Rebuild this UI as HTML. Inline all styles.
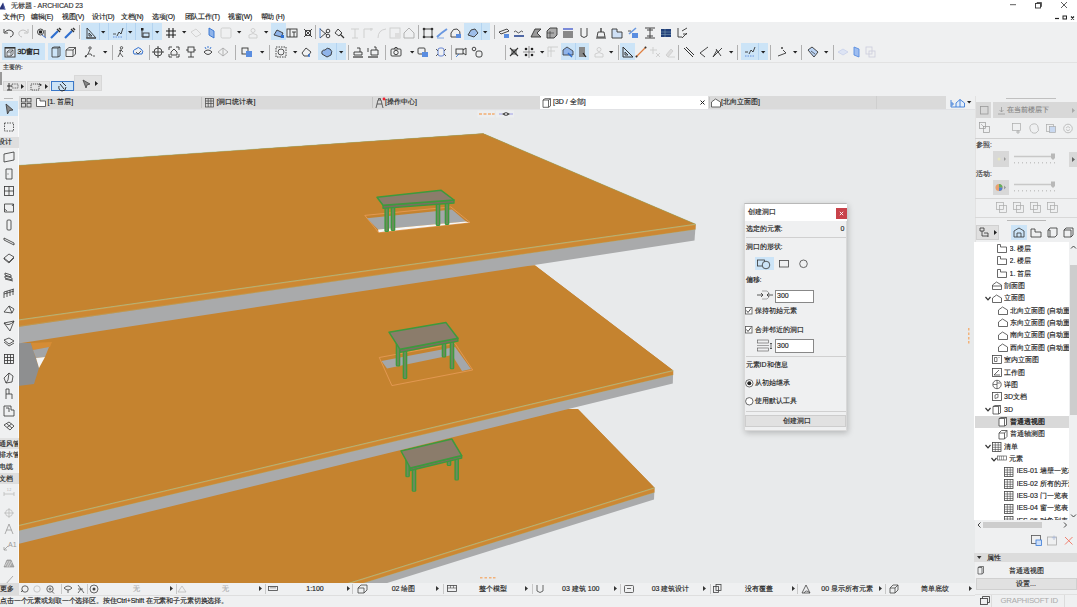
<!DOCTYPE html>
<html><head><meta charset="utf-8">
<style>
*{margin:0;padding:0;box-sizing:border-box}
html,body{width:1077px;height:607px;overflow:hidden;background:#eff0f1;font-family:"Liberation Sans",sans-serif;color:#222}
.a{position:absolute}
.t{position:absolute;white-space:nowrap;-webkit-text-stroke:0.15px currentColor}
svg{overflow:visible}
</style></head><body>

<svg class="a" style="left:0px;top:0px;" width="1077" height="607" viewBox="0 0 1077 607"><defs><clipPath id="vp"><rect x="18" y="109" width="957" height="474"/></clipPath></defs><rect x="18" y="109" width="957" height="474" fill="#e8eaeb"/><g clip-path="url(#vp)"><polygon points="577.8,409 654.5,487.8 654,499.5 387.9,582.7 300,620 0,620 0,420" fill="#a9aaab"/><polygon points="577.8,409 654.5,487.8 654.5,492.5 340,590.5 0,620 0,420" fill="#cc8833"/><polygon points="577.8,409 654.5,487.8 340,586 0,620 0,420" fill="#c5832f"/><polyline points="654.5,487.8 340,586" fill="none" stroke="#9fc79a" stroke-width="0.7"/><polyline points="654.5,488.3 340,586.5" fill="none" stroke="#e9b060" stroke-width="0.5" opacity="0.6"/><polyline points="654.5,492.5 340,590.5" fill="none" stroke="#9fc79a" stroke-width="0.5" opacity="0.5"/><rect x="405.3" y="458" width="4.6" height="19.30000000000001" rx="1.5" fill="#3d9a3d"/><rect x="406.70000000000005" y="458" width="1.8" height="18.30000000000001" fill="#6f8a5e"/><rect x="446.7" y="446" width="4.6" height="20" rx="1.5" fill="#3d9a3d"/><rect x="448.1" y="446" width="1.8" height="19" fill="#6f8a5e"/><rect x="411.7" y="462" width="4.6" height="29.80000000000001" rx="1.5" fill="#3d9a3d"/><rect x="413.1" y="462" width="1.8" height="28.80000000000001" fill="#6f8a5e"/><rect x="454.4" y="452" width="4.6" height="28.600000000000023" rx="1.5" fill="#3d9a3d"/><rect x="455.8" y="452" width="1.8" height="27.600000000000023" fill="#6f8a5e"/><polygon points="410.3,468 461.7,455.6 461.7,458.1 410.3,470.5" fill="#7b6f62" stroke="#3d9a3d" stroke-width="1.3" stroke-linejoin="round"/><polygon points="401,451 451.8,439 461.7,455.6 410.3,468" fill="#8b7c6b" stroke="#3d9a3d" stroke-width="1.5" stroke-linejoin="round"/><polygon points="535,265.6 673.2,370.5 672.8,383.4 0,548.3 0,260" fill="#a9aaab"/><polygon points="535,265.6 673.2,370.5 673.2,375 0,535.4 0,260" fill="#cc8833"/><polygon points="535,265.6 673.2,370.5 0,529.9 0,260" fill="#c5832f"/><polyline points="673.2,370.5 0,529.9" fill="none" stroke="#9fc79a" stroke-width="0.7"/><polyline points="673.2,371 0,530.4" fill="none" stroke="#e9b060" stroke-width="0.5" opacity="0.6"/><polyline points="673.2,375 0,535.4" fill="none" stroke="#9fc79a" stroke-width="0.5" opacity="0.5"/><polygon points="18,343 31,343 39,368 34,384 18,386" fill="#8e8f90"/><polygon points="31,343 52,342 50,347 33,350" fill="#d58c35"/><polygon points="33,350 49,347 45,357 36,358" fill="#a3a5a7"/><polygon points="36,358 45,357 39,368" fill="#f4f5f5"/><polygon points="379.3,357.5 455,343.4 472.7,370 391.9,385.6" fill="#c5832f" stroke="#eea060" stroke-width="0.7"/><polygon points="381.5,361 455,347 471,369 462,371 452,355 387,368.6" fill="#a4a7aa"/><rect x="395.7" y="338" width="4.6" height="28.399999999999977" rx="1.5" fill="#3d9a3d"/><rect x="397.1" y="338" width="1.8" height="27.399999999999977" fill="#6f8a5e"/><rect x="441.7" y="328" width="4.6" height="29.5" rx="1.5" fill="#3d9a3d"/><rect x="443.1" y="328" width="1.8" height="28.5" fill="#6f8a5e"/><rect x="402.7" y="345" width="4.6" height="34" rx="1.5" fill="#3d9a3d"/><rect x="404.1" y="345" width="1.8" height="33" fill="#6f8a5e"/><rect x="449.7" y="334" width="4.6" height="35.30000000000001" rx="1.5" fill="#3d9a3d"/><rect x="451.1" y="334" width="1.8" height="34.30000000000001" fill="#6f8a5e"/><polygon points="400,349.3 457.9,338.2 457.9,341.2 400,352.3" fill="#7b6f62" stroke="#3d9a3d" stroke-width="1.3" stroke-linejoin="round"/><polygon points="389,332.2 446,322.6 457.9,338.2 400,349.3" fill="#8b7c6b" stroke="#3d9a3d" stroke-width="1.5" stroke-linejoin="round"/><polygon points="18,165.4 483.2,133.6 695.7,224.2 694.5,240.6 18,343.5" fill="#a9aaab"/><polygon points="18,165.4 483.2,133.6 695.7,224.2 695.5,229.5 18,326.9" fill="#cc8833"/><polygon points="18,165.4 483.2,133.6 695.7,224.2 18,320" fill="#c5832f"/><polyline points="18,165.4 483.2,133.6 695.7,224.2" fill="none" stroke="#8fae6a" stroke-width="0.6" opacity="0.7"/><polyline points="695.7,224.2 18,320" fill="none" stroke="#9fc79a" stroke-width="0.7"/><polyline points="695.7,224.7 18,320.5" fill="none" stroke="#e9b060" stroke-width="0.5" opacity="0.6"/><polyline points="695.5,229.5 18,326.4" fill="none" stroke="#9fc79a" stroke-width="0.5" opacity="0.5"/><polygon points="364.8,215.4 450.8,206.9 470,222.4 378.7,232.5" fill="#c5832f" stroke="#eea060" stroke-width="0.7"/><polygon points="367,218.2 452,209.6 466,221.6 378,229.5" fill="#a4a7aa"/><polygon points="378,229.5 466,221.6 469,222.6 378.7,232.3" fill="#f6f7f7"/><rect x="384.4" y="200" width="4.6" height="32" rx="1.5" fill="#3d9a3d"/><rect x="385.8" y="200" width="1.8" height="31" fill="#6f8a5e"/><rect x="390.7" y="204" width="4.6" height="27" rx="1.5" fill="#3d9a3d"/><rect x="392.1" y="204" width="1.8" height="26" fill="#6f8a5e"/><rect x="435.7" y="196" width="4.6" height="30" rx="1.5" fill="#3d9a3d"/><rect x="437.1" y="196" width="1.8" height="29" fill="#6f8a5e"/><rect x="444.7" y="199" width="4.6" height="26" rx="1.5" fill="#3d9a3d"/><rect x="446.1" y="199" width="1.8" height="25" fill="#6f8a5e"/><polygon points="383,205.3 454,200 454,203 383,208.3" fill="#7b6f62" stroke="#3d9a3d" stroke-width="1.3" stroke-linejoin="round"/><polygon points="377,197.3 441.2,190.3 454,200 383,205.3" fill="#8b7c6b" stroke="#3d9a3d" stroke-width="1.5" stroke-linejoin="round"/></g><g fill="#f2b27a"><rect x="479" y="113" width="3" height="1.6"/><rect x="483.5" y="113" width="3" height="1.6"/><rect x="488" y="113" width="3" height="1.6"/><rect x="492" y="113" width="2.5" height="1.6"/></g><rect x="477.5" y="110.5" width="17" height="7" fill="#eceef0"/><rect x="496" y="110.5" width="18" height="7" fill="#eceef0"/><path d="M502.5,114 Q506,111 509.5,114 Q506,117 502.5,114 Z" fill="#666" stroke="#333" stroke-width="0.6"/><circle cx="506" cy="114" r="1" fill="#ddd"/><g fill="#f2b27a"><rect x="479" y="113.2" width="3" height="1.6"/><rect x="483.5" y="113.2" width="3" height="1.6"/><rect x="488" y="113.2" width="3" height="1.6"/><rect x="492" y="113.2" width="2.5" height="1.6"/></g><line x1="499" y1="114" x2="502" y2="114" stroke="#a0a0e8" stroke-width="1"/><line x1="510" y1="114" x2="513" y2="114" stroke="#a0a0e8" stroke-width="1"/><g fill="#f2b27a"><rect x="968" y="328" width="1.5" height="2.5"/><rect x="968" y="332.5" width="1.5" height="2.5"/><rect x="968" y="337" width="1.5" height="2.5"/><rect x="968" y="341" width="1.5" height="2.5"/></g><g fill="#f2b27a"><rect x="480" y="577" width="2.5" height="1.5"/><rect x="484.5" y="577" width="2.5" height="1.5"/><rect x="489" y="577" width="2.5" height="1.5"/><rect x="493" y="577" width="2.5" height="1.5"/></g></svg>
<div class="a" style="left:0px;top:0px;width:1077px;height:22px;background:#fff"></div>
<svg class="a" style="left:0px;top:1px;" width="7" height="9" viewBox="0 0 7 9"><path d="M-1,8.5 L3,1.5 L5.5,8.5 Z" fill="#2a3478"/><path d="M3,1.5 L5.5,8.5 L4,8.5 Z" fill="#5a68b0"/></svg>
<div class="t" style="left:11px;top:1px;font-size:7px;line-height:9px;color:#333;letter-spacing:-0.1px">无标题 - ARCHICAD 23</div>
<div class="t" style="left:3px;top:12.5px;font-size:6.8px;line-height:8.8px;color:#222;letter-spacing:-0.2px">文件(F)</div>
<div class="t" style="left:31px;top:12.5px;font-size:6.8px;line-height:8.8px;color:#222;letter-spacing:-0.2px">编辑(E)</div>
<div class="t" style="left:62px;top:12.5px;font-size:6.8px;line-height:8.8px;color:#222;letter-spacing:-0.2px">视图(V)</div>
<div class="t" style="left:92px;top:12.5px;font-size:6.8px;line-height:8.8px;color:#222;letter-spacing:-0.2px">设计(D)</div>
<div class="t" style="left:121px;top:12.5px;font-size:6.8px;line-height:8.8px;color:#222;letter-spacing:-0.2px">文档(N)</div>
<div class="t" style="left:152px;top:12.5px;font-size:6.8px;line-height:8.8px;color:#222;letter-spacing:-0.2px">选项(O)</div>
<div class="t" style="left:184.5px;top:12.5px;font-size:6.8px;line-height:8.8px;color:#222;letter-spacing:-0.2px">团队工作(T)</div>
<div class="t" style="left:228px;top:12.5px;font-size:6.8px;line-height:8.8px;color:#222;letter-spacing:-0.2px">视窗(W)</div>
<div class="t" style="left:260.5px;top:12.5px;font-size:6.8px;line-height:8.8px;color:#222;letter-spacing:-0.2px">帮助 (H)</div>
<svg class="a" style="left:1000px;top:0px;" width="77" height="22" viewBox="0 0 77 22"><line x1="10" y1="4.7" x2="16" y2="4.7" stroke="#333" stroke-width="0.8"/><rect x="35.5" y="3.5" width="5" height="4.5" fill="none" stroke="#333" stroke-width="0.9"/><path d="M37,3.5 V2.5 H41.5 V6.5 H40.5" fill="none" stroke="#333" stroke-width="0.8"/><path d="M61,2 L67,8 M67,2 L61,8" stroke="#333" stroke-width="0.8"/><line x1="55" y1="18.5" x2="59" y2="18.5" stroke="#222" stroke-width="1.2"/><rect x="63" y="16" width="3.5" height="3" fill="none" stroke="#222" stroke-width="1"/><path d="M71,16.5 L74,19.5 M74,16.5 L71,19.5" stroke="#222" stroke-width="1.1"/></svg>
<div class="a" style="left:0px;top:22px;width:1077px;height:40px;background:#eff0f1"></div>
<div class="a" style="left:0px;top:61.5px;width:1077px;height:1px;background:#e2e2e2"></div>
<div class="a" style="left:81.3px;top:23.3px;width:80.7px;height:17.2px;background:#cce4f7"></div>
<div class="a" style="left:98.5px;top:23.3px;width:0.8px;height:17.2px;background:#b3d3f0"></div>
<div class="a" style="left:108px;top:23.3px;width:0.8px;height:17.2px;background:#b3d3f0"></div>
<div class="a" style="left:125.6px;top:23.3px;width:0.8px;height:17.2px;background:#b3d3f0"></div>
<div class="a" style="left:135.2px;top:23.3px;width:0.8px;height:17.2px;background:#b3d3f0"></div>
<div class="a" style="left:152.4px;top:23.3px;width:0.8px;height:17.2px;background:#b3d3f0"></div>
<div class="a" style="left:271px;top:23.3px;width:14.6px;height:17.2px;background:#cce4f7"></div>
<div class="a" style="left:463.5px;top:23.3px;width:26.1px;height:17.2px;background:#cce4f7"></div>
<div class="a" style="left:480.5px;top:23.3px;width:0.8px;height:17.2px;background:#b3d3f0"></div>
<svg class="a" style="left:3px;top:26.5px;" width="12" height="12" viewBox="0 0 12 12"><path d="M2,5 Q6,1 10,5 Q11,9 7,10" fill="none" stroke="#333" stroke-width="0.9"/><path d="M1,2 V6 H5" fill="none" stroke="#333" stroke-width="0.9"/></svg>
<svg class="a" style="left:17px;top:26.5px;" width="12" height="12" viewBox="0 0 12 12"><path d="M10,5 Q6,1 2,5 Q1,9 5,10" fill="none" stroke="#bbb" stroke-width="0.9"/><path d="M11,2 V6 H7" fill="none" stroke="#bbb" stroke-width="0.9"/></svg>
<svg class="a" style="left:36px;top:26.5px;" width="12" height="12" viewBox="0 0 12 12"><circle cx="4.5" cy="5" r="3" fill="none" stroke="#333" stroke-width="0.9"/><rect x="3" y="3.5" width="3" height="3" fill="#222"/><path d="M9,3 V10" fill="none" stroke="#333" stroke-width="0.9"/><path d="M6,8 L10,11" stroke="#4a7ad8" stroke-width="1"/></svg>
<svg class="a" style="left:50px;top:26.5px;" width="12" height="12" viewBox="0 0 12 12"><path d="M1,11 L8,4" stroke="#2f6fd0" stroke-width="2.2"/><path d="M7,2 L10,5" stroke="#333" stroke-width="1.2"/><path d="M9,1 L11,3" stroke="#333" stroke-width="1.5"/></svg>
<svg class="a" style="left:64px;top:26.5px;" width="12" height="12" viewBox="0 0 12 12"><path d="M1,11 L8,4" stroke="#2f6fd0" stroke-width="2.2"/><path d="M7,2 L10,5" stroke="#333" stroke-width="1.2"/><path d="M9,1 L11,3" stroke="#333" stroke-width="1.5"/></svg>
<svg class="a" style="left:85px;top:26.5px;" width="12" height="12" viewBox="0 0 12 12"><path d="M2,1 V11 H11 Z" fill="none" stroke="#333" stroke-width="0.9"/><path d="M4,6 V9 H7 Z" fill="none" stroke="#333" stroke-width="0.9"/><path d="M1,11 H11" stroke="#555" stroke-width="1.3"/></svg>
<svg class="a" style="left:112px;top:26.5px;" width="12" height="12" viewBox="0 0 12 12"><path d="M1,7 H4" stroke="#333" stroke-width="0.8"/><path d="M5,9 L7,5 L9,7 L11,1" fill="none" stroke="#333" stroke-width="0.9"/><path d="M1,10 H11" stroke="#4a7ad8" stroke-width="0.8" stroke-dasharray="1.5,1"/></svg>
<svg class="a" style="left:139px;top:26.5px;" width="12" height="12" viewBox="0 0 12 12"><rect x="2" y="1" width="2.5" height="2.5" fill="#222"/><path d="M3,3 V10 H10" fill="none" stroke="#333" stroke-width="0.9"/><rect x="4" y="6" width="6" height="4" fill="none" stroke="#333" stroke-width="0.9"/></svg>
<svg class="a" style="left:165px;top:26.5px;" width="12" height="12" viewBox="0 0 12 12"><path d="M4,1 V11 M8,1 V11 M1,4 H11 M1,8 H11" stroke="#222" stroke-width="1.1"/></svg>
<svg class="a" style="left:190px;top:26.5px;" width="12" height="12" viewBox="0 0 12 12"><path d="M1,5 L6,2 L11,7 L6,10 Z" fill="none" stroke="#ccc" stroke-width="0.8"/></svg>
<svg class="a" style="left:206px;top:26.5px;" width="12" height="12" viewBox="0 0 12 12"><path d="M3,1 L8,4 V11 L3,8 Z" fill="#8fb4ea" stroke="#2f6fd0" stroke-width="0.9"/></svg>
<svg class="a" style="left:220px;top:26.5px;" width="12" height="12" viewBox="0 0 12 12"><rect x="1" y="1" width="10" height="10" rx="1.5" fill="none" stroke="#ccc" stroke-width="0.9"/></svg>
<svg class="a" style="left:247px;top:26.5px;" width="12" height="12" viewBox="0 0 12 12"><circle cx="6" cy="3.5" r="2" fill="none" stroke="#ccc" stroke-width="0.9"/><path d="M2,11 V8 Q6,5 10,8 V11 Z" fill="none" stroke="#ccc" stroke-width="0.9"/></svg>
<svg class="a" style="left:272.5px;top:26.5px;" width="12" height="12" viewBox="0 0 12 12"><path d="M1,8 L4,3 L10,6 L8,10 Z" fill="#8fb4ea" stroke="#333" stroke-width="0.9"/><rect x="8" y="8" width="3" height="3" fill="#2f6fd0"/></svg>
<svg class="a" style="left:286px;top:26.5px;" width="12" height="12" viewBox="0 0 12 12"><rect x="1" y="2" width="10" height="8" fill="none" stroke="#333" stroke-width="0.9"/><path d="M4,2 V10 M8,5 V10 M6,5 H10" fill="none" stroke="#333" stroke-width="0.9"/></svg>
<svg class="a" style="left:302px;top:26.5px;" width="12" height="12" viewBox="0 0 12 12"><path d="M2,2 L10,10 M10,2 L2,10" fill="none" stroke="#333" stroke-width="0.9"/><rect x="3.5" y="3.5" width="5" height="5" fill="none" stroke="#333" stroke-width="0.9"/></svg>
<svg class="a" style="left:319px;top:26.5px;" width="12" height="12" viewBox="0 0 12 12"><circle cx="9" cy="4" r="1.8" fill="none" stroke="#333" stroke-width="0.9"/><circle cx="9" cy="9" r="1.8" fill="none" stroke="#333" stroke-width="0.9"/><path d="M1,2 L8,8 M1,11 L8,5" fill="none" stroke="#333" stroke-width="0.9"/><path d="M1,1 V11" stroke="#2f6fd0" stroke-width="0.8"/></svg>
<svg class="a" style="left:333px;top:26.5px;" width="12" height="12" viewBox="0 0 12 12"><path d="M2,6 L5,2 L9,6 L6,9 Z" fill="none" stroke="#333" stroke-width="0.9"/><path d="M7,7 L11,11" stroke="#333" stroke-width="1.3"/></svg>
<svg class="a" style="left:349px;top:26.5px;" width="12" height="12" viewBox="0 0 12 12"><path d="M2,2 H10 M6,2 V11 M3,11 H9" fill="none" stroke="#ccc" stroke-width="0.9"/></svg>
<svg class="a" style="left:362px;top:26.5px;" width="12" height="12" viewBox="0 0 12 12"><path d="M2,11 V2 H11 M9,1 V4" fill="none" stroke="#ccc" stroke-width="0.9"/></svg>
<svg class="a" style="left:376px;top:26.5px;" width="12" height="12" viewBox="0 0 12 12"><path d="M2,11 Q2,3 10,2" fill="none" stroke="#ccc" stroke-width="0.9"/></svg>
<svg class="a" style="left:389px;top:26.5px;" width="12" height="12" viewBox="0 0 12 12"><rect x="1" y="1" width="10" height="10" fill="none" stroke="#ccc" stroke-width="0.9"/><rect x="6" y="6" width="5" height="5" fill="#ddd"/></svg>
<svg class="a" style="left:403px;top:26.5px;" width="12" height="12" viewBox="0 0 12 12"><path d="M1,6 L6,1 L11,6 V11 H1 Z" fill="none" stroke="#aaa" stroke-width="0.9"/></svg>
<svg class="a" style="left:422px;top:26.5px;" width="12" height="12" viewBox="0 0 12 12"><rect x="2" y="2" width="8" height="8" fill="none" stroke="#333" stroke-width="0.9"/><circle cx="2" cy="2" r="1.3" fill="#333"/><circle cx="10" cy="2" r="1.3" fill="#333"/><circle cx="2" cy="10" r="1.3" fill="#333"/><circle cx="10" cy="10" r="1.3" fill="#333"/></svg>
<svg class="a" style="left:436px;top:26.5px;" width="12" height="12" viewBox="0 0 12 12"><path d="M1,10 Q5,6 11,2" fill="none" stroke="#6a98e0" stroke-width="2"/><path d="M1,11 H8" stroke="#6a98e0" stroke-width="0.8"/></svg>
<svg class="a" style="left:450px;top:26.5px;" width="12" height="12" viewBox="0 0 12 12"><path d="M1,6 Q3,1 7,2 Q11,4 10,8" fill="none" stroke="#333" stroke-width="0.9"/><path d="M1,6 V10 H6" fill="none" stroke="#333" stroke-width="0.9"/><rect x="6" y="7" width="5" height="4" fill="#5a8de0"/></svg>
<svg class="a" style="left:466.5px;top:26.5px;" width="12" height="12" viewBox="0 0 12 12"><path d="M1,8 L4,3 L8,2 L11,6 L7,10 Z" fill="#9dbde8" stroke="#333" stroke-width="0.9"/></svg>
<svg class="a" style="left:498px;top:26.5px;" width="12" height="12" viewBox="0 0 12 12"><path d="M1,5 L9,2 L11,4 L3,7 Z" fill="none" stroke="#333" stroke-width="0.9"/><rect x="6" y="7" width="5" height="4" fill="#5a8de0"/></svg>
<svg class="a" style="left:513px;top:26.5px;" width="12" height="12" viewBox="0 0 12 12"><path d="M1,5 Q2.5,3 4,5 Q5.5,7 7,5 Q8.5,3 10,5" fill="none" stroke="#333" stroke-width="0.8"/><path d="M1,9 H11" stroke="#1a3a8a" stroke-width="1.5"/></svg>
<svg class="a" style="left:530px;top:26.5px;" width="12" height="12" viewBox="0 0 12 12"><path d="M1,10 L5,2 H11 L7,6 L11,10 Z" fill="#999" stroke="#333" stroke-width="0.9"/></svg>
<svg class="a" style="left:546px;top:26.5px;" width="12" height="12" viewBox="0 0 12 12"><path d="M1,4 L4,1 H11 V8 L8,11 H1 Z" fill="#aaa" stroke="#333" stroke-width="0.9"/><path d="M1,6 H8 M4,4 V11" stroke="#333" stroke-width="0.6"/></svg>
<svg class="a" style="left:562px;top:26.5px;" width="12" height="12" viewBox="0 0 12 12"><rect x="1" y="1" width="10" height="2" fill="#7a8ad8"/><rect x="1" y="4" width="10" height="7" fill="#888"/></svg>
<svg class="a" style="left:578px;top:26.5px;" width="12" height="12" viewBox="0 0 12 12"><path d="M3,1 V9 Q6,12 9,9 V1" fill="none" stroke="#333" stroke-width="0.9"/></svg>
<svg class="a" style="left:595px;top:26.5px;" width="12" height="12" viewBox="0 0 12 12"><path d="M6,1 V5" stroke="#333" stroke-width="1.3"/><path d="M3,5 H9 L10,10 H2 Z" fill="none" stroke="#333" stroke-width="0.9"/><path d="M1,11 H11" stroke="#333" stroke-width="1"/></svg>
<svg class="a" style="left:611px;top:26.5px;" width="12" height="12" viewBox="0 0 12 12"><path d="M1,2 H6 V5 H11 V11 H1 Z" fill="#cfe0f5" stroke="#333" stroke-width="0.9"/></svg>
<svg class="a" style="left:627px;top:26.5px;" width="12" height="12" viewBox="0 0 12 12"><path d="M2,7 L9,1" stroke="#6a98e0" stroke-width="1.6"/><rect x="5" y="6" width="6" height="5" fill="#5a8de0"/><path d="M1,4 H4" stroke="#333" stroke-width="0.8"/></svg>
<svg class="a" style="left:644px;top:26.5px;" width="12" height="12" viewBox="0 0 12 12"><path d="M1,1 H11 M1,11 H11 M6,1 V11 M3,3 H9 M3,9 H9" stroke="#444" stroke-width="1"/></svg>
<svg class="a" style="left:660px;top:26.5px;" width="12" height="12" viewBox="0 0 12 12"><rect x="1" y="2" width="10" height="8" fill="#22407a"/><path d="M1,5 H11 M1,7.5 H11 M5,2 V10" stroke="#8ab" stroke-width="0.5"/></svg>
<svg class="a" style="left:676px;top:26.5px;" width="12" height="12" viewBox="0 0 12 12"><path d="M2,1 V10 H6" fill="none" stroke="#333" stroke-width="0.9"/><path d="M6,4 L11,1 M6,11 L11,6 M7,7 H11" fill="none" stroke="#333" stroke-width="0.9"/></svg>
<svg class="a" style="left:101.3px;top:30.8px;" width="4.4" height="2.6" viewBox="0 0 4.4 2.6"><path d="M0,0 H4.4 L2.2,2.6 Z" fill="#222"/></svg>
<svg class="a" style="left:127.8px;top:30.8px;" width="4.4" height="2.6" viewBox="0 0 4.4 2.6"><path d="M0,0 H4.4 L2.2,2.6 Z" fill="#222"/></svg>
<svg class="a" style="left:155.3px;top:30.8px;" width="4.4" height="2.6" viewBox="0 0 4.4 2.6"><path d="M0,0 H4.4 L2.2,2.6 Z" fill="#222"/></svg>
<svg class="a" style="left:181.8px;top:30.8px;" width="4.4" height="2.6" viewBox="0 0 4.4 2.6"><path d="M0,0 H4.4 L2.2,2.6 Z" fill="#222"/></svg>
<svg class="a" style="left:237.3px;top:30.8px;" width="4.4" height="2.6" viewBox="0 0 4.4 2.6"><path d="M0,0 H4.4 L2.2,2.6 Z" fill="#222"/></svg>
<svg class="a" style="left:264.3px;top:30.8px;" width="4.4" height="2.6" viewBox="0 0 4.4 2.6"><path d="M0,0 H4.4 L2.2,2.6 Z" fill="#222"/></svg>
<svg class="a" style="left:482.8px;top:30.8px;" width="4.4" height="2.6" viewBox="0 0 4.4 2.6"><path d="M0,0 H4.4 L2.2,2.6 Z" fill="#222"/></svg>
<div class="a" style="left:31.5px;top:25px;width:1px;height:14px;background:#b0b0b0"></div>
<div class="a" style="left:79px;top:25px;width:1px;height:14px;background:#b0b0b0"></div>
<div class="a" style="left:315px;top:25px;width:1px;height:14px;background:#b0b0b0"></div>
<div class="a" style="left:417.5px;top:25px;width:1px;height:14px;background:#b0b0b0"></div>
<div class="a" style="left:494px;top:25px;width:1px;height:14px;background:#b0b0b0"></div>
<div class="a" style="left:2.2px;top:43px;width:42.4px;height:17.3px;background:#cce4f7"></div>
<div class="a" style="left:48px;top:43px;width:16.6px;height:17.3px;background:#cce4f7"></div>
<div class="a" style="left:317.5px;top:43px;width:28.5px;height:17.3px;background:#cce4f7"></div>
<div class="a" style="left:335.5px;top:43px;width:0.8px;height:17.3px;background:#b3d3f0"></div>
<div class="a" style="left:561px;top:43px;width:28px;height:17.3px;background:#cce4f7"></div>
<div class="a" style="left:575px;top:43px;width:0.8px;height:17.3px;background:#b3d3f0"></div>
<div class="a" style="left:620px;top:43px;width:14.6px;height:17.3px;background:#cce4f7"></div>
<div class="a" style="left:741px;top:43px;width:27px;height:17.3px;background:#cce4f7"></div>
<div class="a" style="left:758px;top:43px;width:0.8px;height:17.3px;background:#b3d3f0"></div>
<svg class="a" style="left:4px;top:46px;" width="12" height="12" viewBox="0 0 12 12"><rect x="1" y="1.5" width="10" height="9.5" fill="#dfe6ee" stroke="#444" stroke-width="1"/><rect x="1" y="1" width="10" height="1.6" fill="#333"/><path d="M3,10 V6 L5,4 H9 V8 L7,10 Z M3,6 H7 V10 M7,6 L9,4" fill="none" stroke="#444" stroke-width="0.7"/></svg>
<div class="t" style="left:17.5px;top:47px;font-size:7px;line-height:9px;color:#222;letter-spacing:-0.2px;-webkit-text-stroke:0.3px #222">3D窗口</div>
<svg class="a" style="left:50px;top:46px;" width="12" height="12" viewBox="0 0 12 12"><path d="M2,2 L4,1 H10 V10 L8,11 H2 Z M2,2 H8 V11 M8,2 L10,1" fill="none" stroke="#333" stroke-width="0.8"/></svg>
<svg class="a" style="left:65px;top:46px;" width="12" height="12" viewBox="0 0 12 12"><path d="M1,4 L4,1.5 H10.5 V8 L8,10.5 H1 Z M1,4 H8 V10.5 M8,4 L10.5,1.5" fill="none" stroke="#333" stroke-width="0.8"/></svg>
<svg class="a" style="left:84px;top:46px;" width="12" height="12" viewBox="0 0 12 12"><circle cx="6" cy="2" r="1.2" fill="none" stroke="#333" stroke-width="0.8"/><path d="M6,3.5 L4,8 L7,8 L8,10 M1,11 L4,8 M9,10 H11 M3,10.5 L1,11 L2,9" fill="none" stroke="#333" stroke-width="0.8"/></svg>
<svg class="a" style="left:115px;top:46px;" width="12" height="12" viewBox="0 0 12 12"><circle cx="6.5" cy="1.8" r="1.2" fill="none" stroke="#333" stroke-width="0.8"/><path d="M6,3.5 L5,7 L3,11 M5,7 L8,11 M4,5 L6,4 L8,6" fill="none" stroke="#333" stroke-width="0.8"/></svg>
<svg class="a" style="left:132px;top:46px;" width="12" height="12" viewBox="0 0 12 12"><path d="M2,8 Q0,4 4,3 Q6,0 9,3 Q12,5 10,8 Z" fill="none" stroke="#2f6fd0" stroke-width="1"/><path d="M4,6 L6,8 L9,5" fill="none" stroke="#333" stroke-width="0.8"/></svg>
<svg class="a" style="left:152px;top:46px;" width="12" height="12" viewBox="0 0 12 12"><circle cx="6" cy="6" r="4" fill="none" stroke="#333" stroke-width="0.9"/><path d="M6,0 V12 M0,6 H12" fill="none" stroke="#333" stroke-width="0.9"/></svg>
<svg class="a" style="left:168px;top:46px;" width="12" height="12" viewBox="0 0 12 12"><path d="M1,4 V1 H4 M8,1 H11 V4 M11,8 V11 H8 M4,11 H1 V8" fill="none" stroke="#333" stroke-width="0.9"/><path d="M3,6 L6,3 L9,6 V9 H3 Z" fill="none" stroke="#333" stroke-width="0.9"/></svg>
<svg class="a" style="left:185px;top:46px;" width="12" height="12" viewBox="0 0 12 12"><rect x="3" y="1" width="6" height="5" fill="none" stroke="#333" stroke-width="0.9"/><path d="M6,6 V11 M3,11 H9 M1,4 H3 M9,4 H11" fill="none" stroke="#333" stroke-width="0.9"/></svg>
<svg class="a" style="left:202px;top:46px;" width="12" height="12" viewBox="0 0 12 12"><path d="M2,6 Q6,2 10,6 Q6,11 2,6 Z" fill="none" stroke="#333" stroke-width="0.9"/><path d="M3,1 L4,3 M6,0 V2 M9,1 L8,3" stroke="#2f6fd0" stroke-width="0.9"/></svg>
<svg class="a" style="left:217px;top:46px;" width="12" height="12" viewBox="0 0 12 12"><path d="M1,6 L6,2 L11,6 L6,10 Z M6,2 V10" fill="none" stroke="#aaa" stroke-width="0.9"/></svg>
<svg class="a" style="left:241px;top:46px;" width="12" height="12" viewBox="0 0 12 12"><rect x="1" y="2" width="6" height="6" fill="none" stroke="#333" stroke-width="0.9"/><rect x="5" y="5" width="6" height="6" fill="#5a8de0"/></svg>
<svg class="a" style="left:274.5px;top:46px;" width="12" height="12" viewBox="0 0 12 12"><rect x="1" y="1" width="10" height="10" fill="none" stroke="#333" stroke-width="0.9" stroke-dasharray="1.5,1"/><circle cx="6" cy="6" r="3" fill="none" stroke="#333" stroke-width="0.8"/></svg>
<svg class="a" style="left:301px;top:46px;" width="12" height="12" viewBox="0 0 12 12"><path d="M1,7 L5,2 L10,6 L7,10 H3 Z" fill="none" stroke="#333" stroke-width="0.9"/><path d="M8,8 V11" stroke="#2f6fd0" stroke-width="1.5"/></svg>
<svg class="a" style="left:321px;top:46px;" width="12" height="12" viewBox="0 0 12 12"><path d="M1,8 Q0,4 4,4 Q6,1 9,3 Q12,5 10,9 L6,11 Z" fill="#8fb4ea" stroke="#333" stroke-width="0.9"/></svg>
<svg class="a" style="left:352px;top:46px;" width="12" height="12" viewBox="0 0 12 12"><path d="M2,6 H10 V9 H2 Z" fill="none" stroke="#333" stroke-width="0.9"/><path d="M5,2 H8 V6" fill="none" stroke="#333" stroke-width="0.9"/><path d="M1,11 H11" stroke="#333" stroke-width="1.2"/></svg>
<svg class="a" style="left:367px;top:46px;" width="12" height="12" viewBox="0 0 12 12"><path d="M4,4 H11 V9 H4 Z" fill="none" stroke="#333" stroke-width="0.9"/><path d="M7,1 H9 V4 M1,2 V6" fill="none" stroke="#333" stroke-width="0.9"/><path d="M1,11 H11" stroke="#333" stroke-width="1.2"/></svg>
<svg class="a" style="left:390px;top:46px;" width="12" height="12" viewBox="0 0 12 12"><rect x="1" y="3" width="10" height="7" rx="1" fill="none" stroke="#333" stroke-width="0.9"/><circle cx="6" cy="6.5" r="2.2" fill="none" stroke="#333" stroke-width="0.9"/><path d="M4,3 L5,1.5 H7 L8,3" fill="none" stroke="#333" stroke-width="0.9"/></svg>
<svg class="a" style="left:417px;top:46px;" width="12" height="12" viewBox="0 0 12 12"><rect x="1" y="2" width="7" height="6" rx="1" fill="none" stroke="#333" stroke-width="0.9"/><rect x="5" y="6" width="6" height="5" fill="#5a8de0"/></svg>
<svg class="a" style="left:435px;top:46px;" width="12" height="12" viewBox="0 0 12 12"><rect x="3" y="2" width="6" height="8" rx="2" fill="none" stroke="#5a7ad0" stroke-width="0.9"/><path d="M1,3 L3,5 M11,3 L9,5 M1,10 L3,8 M11,10 L9,8" stroke="#333" stroke-width="0.8"/></svg>
<svg class="a" style="left:455px;top:46px;" width="12" height="12" viewBox="0 0 12 12"><rect x="1" y="3" width="7" height="5" fill="none" stroke="#333" stroke-width="0.9"/><path d="M8,4 L11,2 V9 L8,7" fill="none" stroke="#333" stroke-width="0.9"/><path d="M1,11 L4,8" stroke="#2f6fd0" stroke-width="0.8"/></svg>
<svg class="a" style="left:471px;top:46px;" width="12" height="12" viewBox="0 0 12 12"><circle cx="3" cy="3" r="1.8" fill="none" stroke="#333" stroke-width="0.9"/><rect x="5" y="5" width="6" height="6" rx="2" fill="none" stroke="#333" stroke-width="0.9"/></svg>
<svg class="a" style="left:508px;top:46px;" width="12" height="12" viewBox="0 0 12 12"><path d="M2,2 L10,10 M10,2 L2,10" stroke="#333" stroke-width="1.1"/><rect x="4" y="4" width="4" height="4" fill="none" stroke="#333" stroke-width="0.8"/></svg>
<svg class="a" style="left:523px;top:46px;" width="12" height="12" viewBox="0 0 12 12"><g fill="#222"><circle cx="3" cy="3" r="1.3"/><circle cx="9" cy="3" r="1.3"/><circle cx="3" cy="9" r="1.3"/><circle cx="9" cy="9" r="1.3"/></g><path d="M0,6 H12 M6,0 V12" stroke="#555" stroke-width="0.6"/></svg>
<svg class="a" style="left:547px;top:46px;" width="12" height="12" viewBox="0 0 12 12"><path d="M1,11 V1 H11 M4,1 V11 M1,5 H8" fill="none" stroke="#ccc" stroke-width="0.9"/></svg>
<svg class="a" style="left:562px;top:46px;" width="12" height="12" viewBox="0 0 12 12"><path d="M1,4 L5,1 L11,5 V9 H1 Z" fill="#8fb4ea" stroke="#333" stroke-width="0.8"/><path d="M6,7 L10,11" stroke="#2f6fd0" stroke-width="1.5"/></svg>
<svg class="a" style="left:576px;top:46px;" width="12" height="12" viewBox="0 0 12 12"><rect x="3" y="1" width="6" height="10" fill="#888"/><path d="M7,7 L10,11" stroke="#222" stroke-width="1.2"/></svg>
<svg class="a" style="left:593px;top:46px;" width="12" height="12" viewBox="0 0 12 12"><circle cx="6" cy="3.5" r="2" fill="none" stroke="#ccc" stroke-width="0.9"/><path d="M2,11 V8 Q6,5 10,8 V11 Z" fill="none" stroke="#ccc" stroke-width="0.9"/></svg>
<svg class="a" style="left:622px;top:46px;" width="12" height="12" viewBox="0 0 12 12"><path d="M1,1 V11 H11 Z" fill="none" stroke="#333" stroke-width="1"/><path d="M3,6 V9 H6 Z" fill="none" stroke="#333" stroke-width="0.9"/></svg>
<svg class="a" style="left:635px;top:46px;" width="12" height="12" viewBox="0 0 12 12"><path d="M1,11 L11,1" stroke="#e08040" stroke-width="1.2"/><circle cx="1.5" cy="10.5" r="1" fill="#333"/><circle cx="10.5" cy="1.5" r="1" fill="#333"/></svg>
<svg class="a" style="left:649px;top:46px;" width="12" height="12" viewBox="0 0 12 12"><path d="M4,1 V8 M1,4 H8 M7,7 L11,11 M11,7 L7,11" stroke="#ccc" stroke-width="0.9"/></svg>
<svg class="a" style="left:664px;top:46px;" width="12" height="12" viewBox="0 0 12 12"><path d="M2,9 L7,3 L9,5 L4,11 Z" fill="#ddd" stroke="#ccc" stroke-width="0.8"/><path d="M4,11 H11" stroke="#ccc" stroke-width="0.8"/></svg>
<svg class="a" style="left:683px;top:46px;" width="12" height="12" viewBox="0 0 12 12"><path d="M1,2 L10,11 M3,1 L11,9" stroke="#333" stroke-width="1"/></svg>
<svg class="a" style="left:697px;top:46px;" width="12" height="12" viewBox="0 0 12 12"><path d="M11,1 L3,7 L8,11" fill="none" stroke="#333" stroke-width="0.9"/></svg>
<svg class="a" style="left:712px;top:46px;" width="12" height="12" viewBox="0 0 12 12"><path d="M1,11 L10,2 M4,3 L9,10 M1,11 L5,4" fill="none" stroke="#333" stroke-width="0.9"/></svg>
<svg class="a" style="left:744px;top:46px;" width="12" height="12" viewBox="0 0 12 12"><path d="M1,6 H4 M5,8 L7,4 L9,6 L11,1" fill="none" stroke="#333" stroke-width="0.9"/><path d="M1,10 H11" stroke="#4a7ad8" stroke-width="0.8" stroke-dasharray="1.5,1"/></svg>
<svg class="a" style="left:776px;top:46px;" width="12" height="12" viewBox="0 0 12 12"><path d="M6,1 V3 M5,2 H7 M2,10 L10,7 L7,4" fill="none" stroke="#333" stroke-width="0.9"/></svg>
<svg class="a" style="left:807px;top:46px;" width="12" height="12" viewBox="0 0 12 12"><path d="M1,4 L5,1 L11,6 L7,11 Z" fill="#bcd4f4" stroke="#333" stroke-width="0.9"/><path d="M4,5 L8,8" stroke="#333" stroke-width="0.7"/></svg>
<svg class="a" style="left:837px;top:46px;" width="12" height="12" viewBox="0 0 12 12"><path d="M1,6 L6,3 L11,6 L6,9 Z" fill="#dde4f4" stroke="#c8d0ea" stroke-width="0.8"/></svg>
<svg class="a" style="left:851px;top:46px;" width="12" height="12" viewBox="0 0 12 12"><path d="M3,1 L8,3 V11 L3,9 Z" fill="#9dbdf0" stroke="#5a8de0" stroke-width="0.9"/></svg>
<svg class="a" style="left:864px;top:46px;" width="12" height="12" viewBox="0 0 12 12"><rect x="2" y="1" width="6" height="7" fill="none" stroke="#ccd" stroke-width="0.8"/><rect x="5" y="5" width="6" height="6" fill="none" stroke="#ccd" stroke-width="0.8"/></svg>
<svg class="a" style="left:103.3px;top:50.8px;" width="4.4" height="2.6" viewBox="0 0 4.4 2.6"><path d="M0,0 H4.4 L2.2,2.6 Z" fill="#222"/></svg>
<svg class="a" style="left:259.8px;top:50.8px;" width="4.4" height="2.6" viewBox="0 0 4.4 2.6"><path d="M0,0 H4.4 L2.2,2.6 Z" fill="#222"/></svg>
<svg class="a" style="left:293.3px;top:50.8px;" width="4.4" height="2.6" viewBox="0 0 4.4 2.6"><path d="M0,0 H4.4 L2.2,2.6 Z" fill="#222"/></svg>
<svg class="a" style="left:339.3px;top:50.8px;" width="4.4" height="2.6" viewBox="0 0 4.4 2.6"><path d="M0,0 H4.4 L2.2,2.6 Z" fill="#222"/></svg>
<svg class="a" style="left:410.3px;top:50.8px;" width="4.4" height="2.6" viewBox="0 0 4.4 2.6"><path d="M0,0 H4.4 L2.2,2.6 Z" fill="#222"/></svg>
<svg class="a" style="left:539.8px;top:50.8px;" width="4.4" height="2.6" viewBox="0 0 4.4 2.6"><path d="M0,0 H4.4 L2.2,2.6 Z" fill="#222"/></svg>
<svg class="a" style="left:609.3px;top:50.8px;" width="4.4" height="2.6" viewBox="0 0 4.4 2.6"><path d="M0,0 H4.4 L2.2,2.6 Z" fill="#222"/></svg>
<svg class="a" style="left:728.8px;top:50.8px;" width="4.4" height="2.6" viewBox="0 0 4.4 2.6"><path d="M0,0 H4.4 L2.2,2.6 Z" fill="#222"/></svg>
<svg class="a" style="left:761.3px;top:50.8px;" width="4.4" height="2.6" viewBox="0 0 4.4 2.6"><path d="M0,0 H4.4 L2.2,2.6 Z" fill="#222"/></svg>
<svg class="a" style="left:792.8px;top:50.8px;" width="4.4" height="2.6" viewBox="0 0 4.4 2.6"><path d="M0,0 H4.4 L2.2,2.6 Z" fill="#222"/></svg>
<svg class="a" style="left:823.8px;top:50.8px;" width="4.4" height="2.6" viewBox="0 0 4.4 2.6"><path d="M0,0 H4.4 L2.2,2.6 Z" fill="#222"/></svg>
<div class="a" style="left:111.5px;top:44.5px;width:1px;height:15.0px;background:#b0b0b0"></div>
<div class="a" style="left:148.5px;top:44.5px;width:1px;height:15.0px;background:#b0b0b0"></div>
<div class="a" style="left:234.5px;top:44.5px;width:1px;height:15.0px;background:#b0b0b0"></div>
<div class="a" style="left:268.5px;top:44.5px;width:1px;height:15.0px;background:#b0b0b0"></div>
<div class="a" style="left:347.5px;top:44.5px;width:1px;height:15.0px;background:#b0b0b0"></div>
<div class="a" style="left:384.5px;top:44.5px;width:1px;height:15.0px;background:#b0b0b0"></div>
<div class="a" style="left:451px;top:44.5px;width:1px;height:15.0px;background:#b0b0b0"></div>
<div class="a" style="left:504.5px;top:44.5px;width:1px;height:15.0px;background:#b0b0b0"></div>
<div class="a" style="left:617.5px;top:44.5px;width:1px;height:15.0px;background:#b0b0b0"></div>
<div class="a" style="left:678px;top:44.5px;width:1px;height:15.0px;background:#b0b0b0"></div>
<div class="a" style="left:737px;top:44.5px;width:1px;height:15.0px;background:#b0b0b0"></div>
<div class="a" style="left:769.5px;top:44.5px;width:1px;height:15.0px;background:#b0b0b0"></div>
<div class="a" style="left:800.5px;top:44.5px;width:1px;height:15.0px;background:#b0b0b0"></div>
<div class="a" style="left:832.5px;top:44.5px;width:1px;height:15.0px;background:#b0b0b0"></div>
<div class="t" style="left:3px;top:62.5px;font-size:6.2px;line-height:8.2px;color:#222;">主要的:</div>
<div class="a" style="left:0px;top:72px;width:1.5px;height:13px;background:#999"></div>
<div class="a" style="left:3px;top:81px;width:22.6px;height:10.2px;background:#e4e4e4;border:0.5px solid #d6d6d6"></div>
<div class="a" style="left:27px;top:81px;width:22.6px;height:10.2px;background:#e4e4e4;border:0.5px solid #d6d6d6"></div>
<div class="a" style="left:51px;top:81px;width:22.5px;height:10.2px;background:#cce4f7;border:1px solid #3a78c8"></div>
<div class="a" style="left:74px;top:75.4px;width:27.7px;height:15.8px;background:#e2e2e2;border:0.5px solid #d8d8d8"></div>
<svg class="a" style="left:6px;top:82px;" width="14" height="9" viewBox="0 0 14 9"><path d="M1,4 H6 M1,8 H6 M3,1 V8" stroke="#222" stroke-width="0.9"/><rect x="6" y="2" width="6" height="4" fill="none" stroke="#333" stroke-width="0.7" stroke-dasharray="1,0.7"/></svg>
<svg class="a" style="left:20.5px;top:83.5px;" width="3" height="5" viewBox="0 0 3 5"><path d="M0,0 V5 L3,2.5 Z" fill="#222"/></svg>
<svg class="a" style="left:30px;top:82px;" width="14" height="9" viewBox="0 0 14 9"><rect x="1" y="2" width="8" height="6" fill="none" stroke="#333" stroke-width="0.8" stroke-dasharray="1.2,0.8"/><path d="M9,1 L12,3 L10,4 Z" fill="#222"/></svg>
<svg class="a" style="left:44.5px;top:83.5px;" width="3" height="5" viewBox="0 0 3 5"><path d="M0,0 V5 L3,2.5 Z" fill="#222"/></svg>
<svg class="a" style="left:57px;top:81px;" width="12" height="11" viewBox="0 0 12 11"><path d="M2,5 Q1,9 5,10 Q9,10 9,6" fill="none" stroke="#222" stroke-width="0.9"/><path d="M3,3 L7,8 M5,1 L9,5" stroke="#222" stroke-width="0.9"/></svg>
<svg class="a" style="left:82px;top:78.5px;" width="10" height="11" viewBox="0 0 10 11"><path d="M1,1 L8,5 L5,6 L4,9 Z" fill="#888" stroke="#444" stroke-width="0.8"/></svg>
<svg class="a" style="left:94.5px;top:80.5px;" width="3" height="5" viewBox="0 0 3 5"><path d="M0,0 V5 L3,2.5 Z" fill="#222"/></svg>
<div class="a" style="left:18px;top:96.3px;width:928.3px;height:13px;background:#dadada"></div>
<div class="a" style="left:540px;top:96.3px;width:168.4px;height:13px;background:#fff"></div>
<div class="a" style="left:18px;top:109.3px;width:957px;height:1.2px;background:#e1e2e5"></div>
<div class="a" style="left:201px;top:97px;width:0.8px;height:11px;background:#c4c4c4"></div>
<div class="a" style="left:371.6px;top:97px;width:0.8px;height:11px;background:#c4c4c4"></div>
<div class="a" style="left:708.5px;top:97px;width:0.8px;height:11px;background:#c4c4c4"></div>
<svg class="a" style="left:21px;top:98px;" width="11" height="10" viewBox="0 0 11 10"><g fill="none" stroke="#444" stroke-width="0.8"><rect x="0.5" y="0.5" width="4" height="3.5"/><rect x="6" y="0.5" width="4" height="3.5"/><rect x="0.5" y="5.5" width="4" height="3.5"/><rect x="6" y="5.5" width="4" height="3.5"/></g></svg>
<svg class="a" style="left:35.5px;top:98px;" width="10" height="9" viewBox="0 0 10 9"><path d="M0.5,0.5 H4 V3 H9.5 V8.5 H0.5 Z" fill="#fff" stroke="#444" stroke-width="0.8"/></svg>
<div class="t" style="left:47.5px;top:97px;font-size:7px;line-height:9px;color:#222;">[1. 首层]</div>
<svg class="a" style="left:205px;top:97.5px;" width="10" height="10" viewBox="0 0 10 10"><g fill="none" stroke="#444" stroke-width="0.7"><rect x="0.5" y="0.5" width="8" height="8.5"/><path d="M0.5,3 H8.5 M0.5,5.5 H8.5 M3.2,0.5 V9 M5.9,0.5 V9"/></g></svg>
<div class="t" style="left:216.5px;top:97px;font-size:7px;line-height:9px;color:#222;">[洞口统计表]</div>
<svg class="a" style="left:374px;top:96.5px;" width="12" height="12" viewBox="0 0 12 12"><path d="M2,11 L4,3 H7 L9,11 M3,7 H8 M4.5,3 V1.5 H6.5 V3" fill="none" stroke="#444" stroke-width="0.8"/><circle cx="10" cy="2" r="1.4" fill="#e23"/></svg>
<div class="t" style="left:385px;top:97px;font-size:7px;line-height:9px;color:#222;">[操作中心]</div>
<svg class="a" style="left:542px;top:97.5px;" width="10" height="10" viewBox="0 0 10 10"><path d="M1,2 L3,0.7 H8.5 V8 L6.5,9.3 H1 Z M1,2 H6.5 V9.3 M6.5,2 L8.5,0.7" fill="none" stroke="#444" stroke-width="0.8"/></svg>
<div class="t" style="left:553px;top:97px;font-size:7px;line-height:9px;color:#222;">[3D / 全部]</div>
<svg class="a" style="left:699.5px;top:100px;" width="5" height="5" viewBox="0 0 5 5"><path d="M0.5,0.5 L4.5,4.5 M4.5,0.5 L0.5,4.5" stroke="#222" stroke-width="1"/></svg>
<svg class="a" style="left:710.5px;top:97.5px;" width="10" height="10" viewBox="0 0 10 10"><path d="M0.5,9 V4 L4.5,1 L9.5,4 V9 Z" fill="#fff" stroke="#444" stroke-width="0.8"/></svg>
<div class="t" style="left:721px;top:97px;font-size:7px;line-height:9px;color:#222;">[北向立面图]</div>
<div class="a" style="left:876px;top:96px;width:0.8px;height:12.7px;background:#cfcfcf"></div>
<svg class="a" style="left:949.5px;top:98px;" width="16" height="11" viewBox="0 0 16 11"><path d="M1,2 V9 H6 M1,5 H3 V7 H1" fill="none" stroke="#3a7ad8" stroke-width="0.9"/><path d="M6,9 V5 L10,1.5 L14.5,5 V9 Z M10,1.5 V9" fill="#e4eefb" stroke="#3a7ad8" stroke-width="0.9"/></svg>
<svg class="a" style="left:967.3px;top:100.8px;" width="4.4" height="2.6" viewBox="0 0 4.4 2.6"><path d="M0,0 H4.4 L2.2,2.6 Z" fill="#222"/></svg>
<div class="a" style="left:0px;top:96px;width:18.5px;height:487px;background:#eff0f1"></div>
<div class="a" style="left:17.6px;top:109px;width:1px;height:474px;background:#fafafa"></div>
<div class="a" style="left:4px;top:98.3px;width:9px;height:0.8px;background:#b8b8b8"></div>
<div class="a" style="left:0px;top:101.2px;width:18px;height:15px;background:#cce4f7"></div>
<svg class="a" style="left:3px;top:102.5px;" width="12" height="12" viewBox="0 0 12 12"><path d="M3,1 L10,7 L6.5,7.5 L4.5,11 Z" fill="#888" stroke="#333" stroke-width="0.8"/></svg>
<svg class="a" style="left:3px;top:120.6px;" width="12" height="12" viewBox="0 0 12 12"><rect x="1.5" y="2" width="9" height="8" fill="none" stroke="#333" stroke-width="0.8" stroke-dasharray="1.5,1"/></svg>
<svg class="a" style="left:3px;top:150.8px;" width="12" height="12" viewBox="0 0 12 12"><path d="M1,3 L11,1 V9 L1,11 Z" fill="none" stroke="#333" stroke-width="0.8"/></svg>
<svg class="a" style="left:3px;top:168px;" width="12" height="12" viewBox="0 0 12 12"><path d="M3,1 H9 V11 H3 Z" fill="none" stroke="#333" stroke-width="0.8"/><path d="M4.5,6 H5.5" fill="none" stroke="#333" stroke-width="0.8"/></svg>
<svg class="a" style="left:3px;top:185px;" width="12" height="12" viewBox="0 0 12 12"><rect x="1.5" y="1.5" width="9" height="9" fill="none" stroke="#333" stroke-width="0.8"/><path d="M6,1.5 V10.5 M1.5,6 H10.5" fill="none" stroke="#333" stroke-width="0.8"/></svg>
<svg class="a" style="left:3px;top:202px;" width="12" height="12" viewBox="0 0 12 12"><path d="M1.5,2 H10.5 V10 H1.5 Z M1.5,7 L4,9" fill="none" stroke="#333" stroke-width="0.8"/><path d="M10.5,2 L9,4" fill="none" stroke="#333" stroke-width="0.8"/></svg>
<svg class="a" style="left:3px;top:219px;" width="12" height="12" viewBox="0 0 12 12"><rect x="4" y="1" width="4" height="10" rx="1" fill="none" stroke="#333" stroke-width="0.8"/></svg>
<svg class="a" style="left:3px;top:235px;" width="12" height="12" viewBox="0 0 12 12"><path d="M1,3 L11,8 V10 L1,5 Z" fill="none" stroke="#333" stroke-width="0.8"/></svg>
<svg class="a" style="left:3px;top:252.39999999999998px;" width="12" height="12" viewBox="0 0 12 12"><path d="M1,6 L6,2 L11,5 L6,10 Z M1,6 V7 L6,11 L11,6" fill="none" stroke="#333" stroke-width="0.8"/></svg>
<svg class="a" style="left:3px;top:270.6px;" width="12" height="12" viewBox="0 0 12 12"><path d="M2,2 L8,4 V6 L2,4 Z M2,5 L9,7 V9 L2,7 Z M2,8 L10,10" fill="none" stroke="#333" stroke-width="0.8"/></svg>
<svg class="a" style="left:3px;top:287.4px;" width="12" height="12" viewBox="0 0 12 12"><path d="M1,5 L11,2 M1,5 V11 M4,4 V10 M7,3 V9 M10,2 V8 M1,7 L11,4" fill="none" stroke="#333" stroke-width="0.8"/></svg>
<svg class="a" style="left:3px;top:302.8px;" width="12" height="12" viewBox="0 0 12 12"><path d="M1,9 L6,3 L11,6 L9,10 Z M6,3 L9,10" fill="none" stroke="#333" stroke-width="0.8"/></svg>
<svg class="a" style="left:3px;top:319.6px;" width="12" height="12" viewBox="0 0 12 12"><path d="M1,3 L11,1 L7,11 Z M1,3 Q6,7 11,1" fill="none" stroke="#333" stroke-width="0.8"/></svg>
<svg class="a" style="left:3px;top:336.4px;" width="12" height="12" viewBox="0 0 12 12"><path d="M1,4 L6,2 L11,5 L6,8 Z M1,6 L6,10 L11,7" fill="none" stroke="#333" stroke-width="0.8"/></svg>
<svg class="a" style="left:3px;top:353px;" width="12" height="12" viewBox="0 0 12 12"><rect x="1.5" y="1.5" width="9" height="9" fill="none" stroke="#333" stroke-width="0.8"/><path d="M4.5,1.5 V10.5 M7.5,1.5 V10.5 M1.5,4.5 H10.5 M1.5,7.5 H10.5" fill="none" stroke="#333" stroke-width="0.8"/></svg>
<svg class="a" style="left:3px;top:371.5px;" width="12" height="12" viewBox="0 0 12 12"><path d="M3,11 L1,6 L6,1 L10,4 L9,10 Z M6,1 L5,8 L3,11" fill="none" stroke="#333" stroke-width="0.8"/></svg>
<svg class="a" style="left:3px;top:388px;" width="12" height="12" viewBox="0 0 12 12"><path d="M3,1 V11 M3,6 H9 V11 M3,1 H6 V6" fill="none" stroke="#333" stroke-width="0.8"/></svg>
<svg class="a" style="left:3px;top:405px;" width="12" height="12" viewBox="0 0 12 12"><path d="M1,1 H8 V5 H11 V11 H1 Z" fill="none" stroke="#333" stroke-width="0.8"/><path d="M3,3 H6 V7" fill="none" stroke="#333" stroke-width="0.8"/></svg>
<svg class="a" style="left:3px;top:420px;" width="12" height="12" viewBox="0 0 12 12"><path d="M1,5 L6,2 L11,6 L7,10 Z M3.5,3.5 L9,8 M4,7.5 L8.5,4" fill="none" stroke="#333" stroke-width="0.8"/></svg>
<svg class="a" style="left:3px;top:486.8px;" width="12" height="12" viewBox="0 0 12 12"><path d="M1,7 H11 M1,5 V9 M11,5 V9" fill="none" stroke="#bbb" stroke-width="0.8"/><text x="4" y="4" font-size="3" fill="#aaa">1.2</text></svg>
<svg class="a" style="left:3px;top:505.8px;" width="12" height="12" viewBox="0 0 12 12"><circle cx="6" cy="7" r="3.5" fill="none" stroke="#bbb" stroke-width="0.8"/><path d="M6,2 V12 M1,7 H11" stroke="#bbb" stroke-width="0.8"/></svg>
<svg class="a" style="left:3px;top:523.3px;" width="12" height="12" viewBox="0 0 12 12"><path d="M2,11 L6,1 L10,11 M3.5,7 H8.5" fill="none" stroke="#999" stroke-width="0.8"/></svg>
<svg class="a" style="left:3px;top:539px;" width="12" height="12" viewBox="0 0 12 12"><path d="M1,11 L5,7 M1,8 V11 H4" fill="none" stroke="#999" stroke-width="0.8"/><text x="5" y="8" font-size="7" fill="#999" font-family="Liberation Sans">A1</text></svg>
<svg class="a" style="left:3px;top:556.6px;" width="12" height="12" viewBox="0 0 12 12"><path d="M1,10 L4,3 H8 L11,10 Z" fill="#aaa" stroke="#888" stroke-width="0.6"/><path d="M2,9 L5,4 M4,10 L7,4 M6,10 L9,5" stroke="#eee" stroke-width="0.6"/></svg>
<svg class="a" style="left:3px;top:574px;" width="12" height="12" viewBox="0 0 12 12"><path d="M2,11 L10,2" stroke="#999" stroke-width="0.8"/></svg>
<div class="a" style="left:0px;top:137px;width:18.5px;height:10.6px;background:#dedede"></div>
<div class="t" style="left:-2px;top:137.3px;font-size:7px;line-height:9px;color:#222;width:20px;overflow:hidden">设计</div>
<div class="a" style="left:0px;top:437.5px;width:18.5px;height:11px;background:#e2e2e2"></div>
<div class="t" style="left:-1px;top:439.5px;font-size:6.5px;line-height:8.5px;color:#222;width:19px;overflow:hidden">通风管</div>
<div class="t" style="left:-1px;top:451.0px;font-size:6.5px;line-height:8.5px;color:#222;width:19px;overflow:hidden">排水管</div>
<div class="t" style="left:-1px;top:463.0px;font-size:6.5px;line-height:8.5px;color:#222;width:19px;overflow:hidden">电缆</div>
<div class="a" style="left:0px;top:473.0px;width:18.5px;height:11px;background:#dedede"></div>
<div class="t" style="left:-1px;top:475.0px;font-size:6.5px;line-height:8.5px;color:#222;width:19px;overflow:hidden">文档</div>
<div class="a" style="left:0px;top:583px;width:975px;height:12px;background:#eff0f1"></div>
<div class="a" style="left:0px;top:595px;width:975px;height:12px;background:#eff0f1"></div>
<div class="a" style="left:0px;top:583px;width:18.5px;height:12px;background:#dcdcdc"></div>
<div class="a" style="left:0px;top:594.5px;width:975px;height:0.7px;background:#dedede"></div>
<div class="t" style="left:0px;top:584px;font-size:7px;line-height:9px;color:#222;">更多</div>
<svg class="a" style="left:20px;top:584px;" width="60" height="10" viewBox="0 0 60 10"><circle cx="5" cy="5" r="3.2" fill="none" stroke="#444" stroke-width="0.8"/><path d="M1,8 L3,6" stroke="#444" stroke-width="0.8"/><circle cx="17" cy="5" r="3.2" fill="none" stroke="#bbb" stroke-width="0.8"/><circle cx="30" cy="5" r="3.2" fill="none" stroke="#444" stroke-width="0.8"/><path d="M28.5,5 H31.5 M30,3.5 V6.5 M32,7.5 L34,9.5" stroke="#444" stroke-width="0.8"/></svg>
<svg class="a" style="left:62px;top:584px;" width="30" height="10" viewBox="0 0 30 10"><path d="M2,4 Q6,0 10,4 Q6,8 2,4 Z" fill="none" stroke="#444" stroke-width="0.8"/><path d="M6,6 V9" stroke="#444" stroke-width="0.8"/><path d="M16,1 L19,5 L16,9 M19,5 L22,9 M16,5 H21" fill="none" stroke="#444" stroke-width="0.8"/></svg>
<svg class="a" style="left:89px;top:584px;" width="10" height="10" viewBox="0 0 10 10"><circle cx="5" cy="5" r="4" fill="none" stroke="#444" stroke-width="0.8"/><circle cx="5" cy="5" r="1.5" fill="#444"/></svg>
<svg class="a" style="left:177px;top:584px;" width="10" height="10" viewBox="0 0 10 10"><path d="M1,8 L5,2 L9,8 Z" fill="none" stroke="#bbb" stroke-width="0.8"/></svg>
<div class="a" style="left:60.5px;top:584px;width:0.8px;height:10px;background:#c8c8c8"></div>
<div class="a" style="left:86.5px;top:584px;width:0.8px;height:10px;background:#c8c8c8"></div>
<div class="a" style="left:176px;top:584px;width:0.8px;height:10px;background:#c8c8c8"></div>
<div class="a" style="left:265px;top:584px;width:0.8px;height:10px;background:#c8c8c8"></div>
<div class="a" style="left:352px;top:584px;width:0.8px;height:10px;background:#c8c8c8"></div>
<div class="a" style="left:443px;top:584px;width:0.8px;height:10px;background:#c8c8c8"></div>
<div class="a" style="left:532px;top:584px;width:0.8px;height:10px;background:#c8c8c8"></div>
<div class="a" style="left:620px;top:584px;width:0.8px;height:10px;background:#c8c8c8"></div>
<div class="a" style="left:710px;top:584px;width:0.8px;height:10px;background:#c8c8c8"></div>
<div class="a" style="left:797px;top:584px;width:0.8px;height:10px;background:#c8c8c8"></div>
<div class="a" style="left:885px;top:584px;width:0.8px;height:10px;background:#c8c8c8"></div>
<svg class="a" style="left:169.5px;top:586.0px;" width="3" height="5" viewBox="0 0 3 5"><path d="M0,0 V5 L3,2.5 Z" fill="#333"/></svg>
<svg class="a" style="left:258.5px;top:586.0px;" width="3" height="5" viewBox="0 0 3 5"><path d="M0,0 V5 L3,2.5 Z" fill="#333"/></svg>
<svg class="a" style="left:346.5px;top:586.0px;" width="3" height="5" viewBox="0 0 3 5"><path d="M0,0 V5 L3,2.5 Z" fill="#333"/></svg>
<svg class="a" style="left:435.5px;top:586.0px;" width="3" height="5" viewBox="0 0 3 5"><path d="M0,0 V5 L3,2.5 Z" fill="#333"/></svg>
<svg class="a" style="left:524.5px;top:586.0px;" width="3" height="5" viewBox="0 0 3 5"><path d="M0,0 V5 L3,2.5 Z" fill="#333"/></svg>
<svg class="a" style="left:613.5px;top:586.0px;" width="3" height="5" viewBox="0 0 3 5"><path d="M0,0 V5 L3,2.5 Z" fill="#333"/></svg>
<svg class="a" style="left:702.5px;top:586.0px;" width="3" height="5" viewBox="0 0 3 5"><path d="M0,0 V5 L3,2.5 Z" fill="#333"/></svg>
<svg class="a" style="left:791.5px;top:586.0px;" width="3" height="5" viewBox="0 0 3 5"><path d="M0,0 V5 L3,2.5 Z" fill="#333"/></svg>
<svg class="a" style="left:878.5px;top:586.0px;" width="3" height="5" viewBox="0 0 3 5"><path d="M0,0 V5 L3,2.5 Z" fill="#333"/></svg>
<svg class="a" style="left:968.5px;top:586.0px;" width="3" height="5" viewBox="0 0 3 5"><path d="M0,0 V5 L3,2.5 Z" fill="#333"/></svg>
<div class="t" style="left:76.30000000000001px;width:120px;text-align:center;top:584px;font-size:7px;line-height:9px;color:#aaa;">无</div>
<div class="t" style="left:165.7px;width:120px;text-align:center;top:584px;font-size:7px;line-height:9px;color:#aaa;">无</div>
<svg class="a" style="left:268px;top:585px;" width="11" height="8" viewBox="0 0 11 8"><rect x="0.5" y="1.5" width="9" height="4" fill="none" stroke="#444" stroke-width="0.8"/><path d="M3,1.5 V3.5 M5,1.5 V3.5 M7,1.5 V3.5" stroke="#444" stroke-width="0.6"/></svg>
<div class="t" style="left:255px;width:120px;text-align:center;top:584px;font-size:7px;line-height:9px;color:#222;">1:100</div>
<svg class="a" style="left:357px;top:584px;" width="11" height="10" viewBox="0 0 11 10"><path d="M1,4 L4,1 H10 V6 L7,9 H1 Z M1,4 H7 V9" fill="none" stroke="#444" stroke-width="0.8"/></svg>
<div class="t" style="left:343.5px;width:120px;text-align:center;top:584px;font-size:7px;line-height:9px;color:#222;">02 绘图</div>
<svg class="a" style="left:447px;top:584px;" width="11" height="10" viewBox="0 0 11 10"><rect x="0.5" y="1.5" width="9" height="6" fill="none" stroke="#444" stroke-width="0.8"/><path d="M0.5,4 H9.5 M3.5,1.5 V4 M6.5,1.5 V4" stroke="#444" stroke-width="0.6"/></svg>
<div class="t" style="left:433px;width:120px;text-align:center;top:584px;font-size:7px;line-height:9px;color:#222;">整个模型</div>
<svg class="a" style="left:535px;top:584px;" width="10" height="10" viewBox="0 0 10 10"><path d="M2,1 V7 Q5,10 8,7 V1" fill="none" stroke="#444" stroke-width="0.8"/></svg>
<div class="t" style="left:520.8px;width:120px;text-align:center;top:584px;font-size:7px;line-height:9px;color:#222;">03 建筑 100</div>
<svg class="a" style="left:624px;top:584px;" width="11" height="10" viewBox="0 0 11 10"><rect x="0.5" y="1.5" width="9" height="7" rx="1" fill="none" stroke="#444" stroke-width="0.8"/><path d="M3,4.5 H7" stroke="#444" stroke-width="0.8"/></svg>
<div class="t" style="left:610.6px;width:120px;text-align:center;top:584px;font-size:7px;line-height:9px;color:#222;">03 建筑设计</div>
<svg class="a" style="left:713px;top:584px;" width="11" height="10" viewBox="0 0 11 10"><rect x="0.5" y="2.5" width="5" height="6" fill="none" stroke="#444" stroke-width="0.8"/><rect x="3" y="0.5" width="5" height="6" fill="none" stroke="#444" stroke-width="0.8"/></svg>
<div class="t" style="left:698.6px;width:120px;text-align:center;top:584px;font-size:7px;line-height:9px;color:#222;">没有覆盖</div>
<svg class="a" style="left:801px;top:584px;" width="11" height="10" viewBox="0 0 11 10"><path d="M1,9 L5,1 L9,9 Z M3,9 Q5,5 9,9" fill="none" stroke="#444" stroke-width="0.8"/></svg>
<div class="t" style="left:787.2px;width:120px;text-align:center;top:584px;font-size:7px;line-height:9px;color:#222;">00 显示所有元素</div>
<svg class="a" style="left:889px;top:584px;" width="11" height="10" viewBox="0 0 11 10"><path d="M1,4 L4,1 H9 V6 L6,9 H1 Z M1,4 H6 V9 M6,4 L9,1" fill="none" stroke="#444" stroke-width="0.8"/></svg>
<div class="t" style="left:875.4px;width:120px;text-align:center;top:584px;font-size:7px;line-height:9px;color:#222;">简单底纹</div>
<div class="t" style="left:0px;top:596px;font-size:7px;line-height:9px;color:#222;letter-spacing:-0.15px">点击一个元素或划取一个选择区。按住Ctrl+Shift 在元素和子元素切换选择。</div>
<div class="a" style="left:975px;top:96px;width:102px;height:511px;background:#eff0f1"></div>
<div class="a" style="left:974.5px;top:96px;width:1px;height:511px;background:#e2e2e2"></div>
<div class="a" style="left:1006px;top:98.3px;width:50px;height:0.8px;background:#c0c0c0"></div>
<div class="a" style="left:976.4px;top:102.4px;width:15px;height:16px;background:#d8d8d8"></div>
<svg class="a" style="left:979.5px;top:106px;" width="9" height="9" viewBox="0 0 9 9"><rect x="0.5" y="0.5" width="7.5" height="7.5" fill="none" stroke="#999" stroke-width="0.8"/></svg>
<div class="a" style="left:993px;top:102.4px;width:84px;height:16px;background:#d8d8d8"></div>
<svg class="a" style="left:997px;top:106px;" width="9" height="9" viewBox="0 0 9 9"><path d="M1,8 H8 M4.5,1 V6 M2.5,4 L4.5,6 L6.5,4" fill="none" stroke="#999" stroke-width="0.8"/></svg>
<div class="t" style="left:1006.5px;top:104.5px;font-size:7px;line-height:9px;color:#888;">在当前楼层下</div>
<svg class="a" style="left:1071.5px;top:107.5px;" width="3" height="5" viewBox="0 0 3 5"><path d="M0,0 V5 L3,2.5 Z" fill="#aaa"/></svg>
<svg class="a" style="left:979px;top:122px;" width="12" height="12" viewBox="0 0 12 12"><rect x="0.5" y="0.5" width="6" height="6" fill="none" stroke="#999" stroke-width="0.7"/><rect x="4.5" y="4.5" width="6" height="6" fill="none" stroke="#999" stroke-width="0.7"/><path d="M2,2 L5,5" stroke="#999" stroke-width="0.6"/></svg>
<svg class="a" style="left:1012px;top:123px;" width="12" height="12" viewBox="0 0 12 12"><rect x="0.5" y="0.5" width="8" height="7" fill="none" stroke="#aaa" stroke-width="0.7"/><path d="M6,7 V11 M4,9 H8" stroke="#aaa" stroke-width="0.8"/></svg>
<svg class="a" style="left:1029px;top:123px;" width="12" height="12" viewBox="0 0 12 12"><path d="M1,6 Q0,2 4,1 Q8,0 9,4 Q11,8 7,10 Q2,11 1,6 Z" fill="none" stroke="#aaa" stroke-width="0.7"/></svg>
<svg class="a" style="left:1046px;top:123px;" width="12" height="12" viewBox="0 0 12 12"><rect x="0.5" y="1.5" width="7" height="7" fill="none" stroke="#aaa" stroke-width="0.7"/><rect x="3.5" y="3.5" width="6" height="6" fill="#c8d8f0" stroke="#aaa" stroke-width="0.7"/></svg>
<svg class="a" style="left:1063px;top:123px;" width="12" height="12" viewBox="0 0 12 12"><circle cx="5" cy="5.5" r="4.3" fill="none" stroke="#aaa" stroke-width="0.7"/><path d="M3,5 Q5,2 7,5 M3,6.5 Q5,9 7,6.5" fill="none" stroke="#aaa" stroke-width="0.6"/></svg>
<div class="a" style="left:975px;top:138px;width:102px;height:0.8px;background:#d0d0d0"></div>
<div class="t" style="left:976px;top:141px;font-size:6.5px;line-height:8.5px;color:#333;">参照:</div>
<div class="a" style="left:993px;top:151.3px;width:15.7px;height:15.4px;background:#d8d8d8"></div>
<svg class="a" style="left:997px;top:156px;" width="10" height="6" viewBox="0 0 10 6"><circle cx="2" cy="3" r="1.5" fill="#e6e6c0"/><path d="M7,1 V5 L9,3 Z" fill="#999"/></svg>
<svg class="a" style="left:1012px;top:153px;" width="45" height="12" viewBox="0 0 45 12"><path d="M2,3.5 H42" stroke="#c8c8c8" stroke-width="1.4"/><path d="M39,0.5 H43 V5 L41,7 L39,5 Z" fill="#b8b8b8"/><g fill="#bbb"><rect x="2" y="9" width="0.8" height="1.5"/><rect x="6" y="9" width="0.8" height="1.5"/><rect x="10" y="9" width="0.8" height="1.5"/><rect x="14" y="9" width="0.8" height="1.5"/><rect x="18" y="9" width="0.8" height="1.5"/><rect x="22" y="9" width="0.8" height="1.5"/><rect x="26" y="9" width="0.8" height="1.5"/><rect x="30" y="9" width="0.8" height="1.5"/><rect x="34" y="9" width="0.8" height="1.5"/><rect x="38" y="9" width="0.8" height="1.5"/><rect x="42" y="9" width="0.8" height="1.5"/></g></svg>
<div class="a" style="left:1069px;top:152px;width:8px;height:15px;background:#d8d8d8"></div>
<svg class="a" style="left:1071.5px;top:157.0px;" width="3" height="5" viewBox="0 0 3 5"><path d="M0,0 V5 L3,2.5 Z" fill="#666"/></svg>
<div class="t" style="left:976px;top:169.5px;font-size:6.5px;line-height:8.5px;color:#333;">活动:</div>
<div class="a" style="left:993px;top:179.8px;width:15.7px;height:15.4px;background:#d8d8d8"></div>
<svg class="a" style="left:995px;top:183px;" width="13" height="9" viewBox="0 0 13 9"><circle cx="4" cy="4.5" r="3.5" fill="#e8a070"/><path d="M4,4.5 L4,1 A3.5,3.5 0 0 1 7.5,4.5 Z" fill="#60b060"/><path d="M4,4.5 L7.5,4.5 A3.5,3.5 0 0 1 4,8 Z" fill="#5080d0"/><path d="M9,2.5 V6.5 L11,4.5 Z" fill="#999"/></svg>
<svg class="a" style="left:1012px;top:181px;" width="45" height="12" viewBox="0 0 45 12"><path d="M2,3.5 H42" stroke="#c8c8c8" stroke-width="1.4"/><path d="M39,0.5 H43 V5 L41,7 L39,5 Z" fill="#b8b8b8"/><g fill="#bbb"><rect x="2" y="9" width="0.8" height="1.5"/><rect x="6" y="9" width="0.8" height="1.5"/><rect x="10" y="9" width="0.8" height="1.5"/><rect x="14" y="9" width="0.8" height="1.5"/><rect x="18" y="9" width="0.8" height="1.5"/><rect x="22" y="9" width="0.8" height="1.5"/><rect x="26" y="9" width="0.8" height="1.5"/><rect x="30" y="9" width="0.8" height="1.5"/><rect x="34" y="9" width="0.8" height="1.5"/><rect x="38" y="9" width="0.8" height="1.5"/><rect x="42" y="9" width="0.8" height="1.5"/></g></svg>
<div class="a" style="left:975px;top:197.6px;width:102px;height:0.8px;background:#d8d8d8"></div>
<svg class="a" style="left:996px;top:202px;" width="12" height="12" viewBox="0 0 12 12"><rect x="0.5" y="0.5" width="7" height="7" fill="none" stroke="#aaa" stroke-width="0.7"/><rect x="3.5" y="3.5" width="7" height="7" fill="none" stroke="#aaa" stroke-width="0.7"/></svg>
<svg class="a" style="left:1013px;top:202px;" width="12" height="12" viewBox="0 0 12 12"><rect x="0.5" y="0.5" width="7" height="7" fill="none" stroke="#aaa" stroke-width="0.7"/><rect x="3.5" y="3.5" width="7" height="7" fill="none" stroke="#aaa" stroke-width="0.7"/></svg>
<svg class="a" style="left:1030px;top:202px;" width="12" height="12" viewBox="0 0 12 12"><rect x="0.5" y="0.5" width="7" height="7" fill="none" stroke="#aaa" stroke-width="0.7"/><rect x="3.5" y="3.5" width="7" height="7" fill="none" stroke="#aaa" stroke-width="0.7"/></svg>
<svg class="a" style="left:1047px;top:202px;" width="12" height="12" viewBox="0 0 12 12"><rect x="0.5" y="0.5" width="7" height="7" fill="none" stroke="#aaa" stroke-width="0.7"/><rect x="3.5" y="3.5" width="7" height="7" fill="none" stroke="#aaa" stroke-width="0.7"/></svg>
<div class="a" style="left:975px;top:217.3px;width:102px;height:0.8px;background:#d8d8d8"></div>
<div class="a" style="left:1006.5px;top:219.8px;width:39.5px;height:0.8px;background:#b8b8b8"></div>
<div class="a" style="left:975.9px;top:224.8px;width:22.7px;height:15.2px;background:#e0e0e0;border:0.5px solid #d0d0d0"></div>
<svg class="a" style="left:979px;top:227px;" width="12" height="11" viewBox="0 0 12 11"><path d="M1,1 H5 V4 H1 Z M3,4 V9 H9 M5,6 H9 V10" fill="none" stroke="#333" stroke-width="0.8"/></svg>
<svg class="a" style="left:993.5px;top:230.0px;" width="3" height="5" viewBox="0 0 3 5"><path d="M0,0 V5 L3,2.5 Z" fill="#222"/></svg>
<div class="a" style="left:1010.5px;top:224.8px;width:16.5px;height:15.2px;background:#cce4f7"></div>
<svg class="a" style="left:1013px;top:227px;" width="12" height="11" viewBox="0 0 12 11"><path d="M1,10 V4 L6,1 L11,4 V10 Z M4,10 V6 H8 V10" fill="none" stroke="#333" stroke-width="0.8"/></svg>
<svg class="a" style="left:1030px;top:227px;" width="12" height="11" viewBox="0 0 12 11"><path d="M1,10 V2 H5 V5 H11 V10 Z" fill="none" stroke="#333" stroke-width="0.8"/></svg>
<svg class="a" style="left:1046px;top:227px;" width="12" height="11" viewBox="0 0 12 11"><path d="M2,10 V3 L4,1 H11 V8 L9,10 Z M2,3 H4 V10" fill="none" stroke="#333" stroke-width="0.8"/></svg>
<svg class="a" style="left:1063px;top:227px;" width="12" height="11" viewBox="0 0 12 11"><path d="M1,3 L3,1 H10 V8 L8,10 H1 Z M1,3 H8 V10" fill="none" stroke="#333" stroke-width="0.8"/></svg>
<div class="a" style="left:974.3px;top:242px;width:95.1px;height:278px;background:#fff"></div>
<div class="a" style="left:1069.4px;top:242px;width:7.6px;height:278px;background:#eff0f1"></div>
<div class="a" style="left:1070px;top:265px;width:7px;height:149.6px;background:#cdcdcd"></div>
<svg class="a" style="left:1070px;top:244px;" width="7" height="6" viewBox="0 0 7 6"><path d="M1,4.5 L3.5,2 L6,4.5" fill="none" stroke="#333" stroke-width="0.9"/></svg>
<svg class="a" style="left:1070px;top:513px;" width="7" height="6" viewBox="0 0 7 6"><path d="M1,1.5 L3.5,4 L6,1.5" fill="none" stroke="#333" stroke-width="0.9"/></svg>
<svg class="a" style="left:997px;top:244.1px;" width="10" height="10" viewBox="0 0 10 10"><path d="M0.5,0.5 H3.5 V3 H9.5 V8.5 H0.5 Z" fill="#fff" stroke="#444" stroke-width="0.8"/></svg>
<div class="t" style="left:1009.5px;top:243.9px;font-size:7px;line-height:9px;color:#222;width:59.90000000000009px;overflow:hidden">3. 楼层</div>
<svg class="a" style="left:997px;top:256.46px;" width="10" height="10" viewBox="0 0 10 10"><path d="M0.5,0.5 H3.5 V3 H9.5 V8.5 H0.5 Z" fill="#fff" stroke="#444" stroke-width="0.8"/></svg>
<div class="t" style="left:1009.5px;top:256.26px;font-size:7px;line-height:9px;color:#222;width:59.90000000000009px;overflow:hidden">2. 楼层</div>
<svg class="a" style="left:997px;top:268.82px;" width="10" height="10" viewBox="0 0 10 10"><path d="M0.5,0.5 H3.5 V3 H9.5 V8.5 H0.5 Z" fill="#fff" stroke="#444" stroke-width="0.8"/></svg>
<div class="t" style="left:1009.5px;top:268.62px;font-size:7px;line-height:9px;color:#222;width:59.90000000000009px;overflow:hidden">1. 首层</div>
<svg class="a" style="left:991.5px;top:281.18px;" width="10" height="10" viewBox="0 0 10 10"><path d="M0.5,8.5 V4 L4.5,1 L9.5,4 V8.5 Z M0.5,5 H9.5" fill="#fff" stroke="#444" stroke-width="0.8"/></svg>
<div class="t" style="left:1004.0px;top:280.98px;font-size:7px;line-height:9px;color:#222;width:65.40000000000009px;overflow:hidden">剖面图</div>
<svg class="a" style="left:991.5px;top:293.54px;" width="10" height="10" viewBox="0 0 10 10"><path d="M0.5,8.5 V4 L4.5,1 L9.5,4 V8.5 Z" fill="#fff" stroke="#444" stroke-width="0.8"/></svg>
<svg class="a" style="left:985px;top:295.84000000000003px;" width="6" height="5" viewBox="0 0 6 5"><path d="M0.5,1 L3,3.8 L5.5,1" fill="none" stroke="#333" stroke-width="1.2"/></svg>
<div class="t" style="left:1004.0px;top:293.34000000000003px;font-size:7px;line-height:9px;color:#222;width:65.40000000000009px;overflow:hidden">立面图</div>
<svg class="a" style="left:997.5px;top:305.9px;" width="10" height="10" viewBox="0 0 10 10"><path d="M0.5,8.5 V4 L4.5,1 L9.5,4 V8.5 Z" fill="#fff" stroke="#444" stroke-width="0.8"/></svg>
<div class="t" style="left:1010.0px;top:305.7px;font-size:7px;line-height:9px;color:#222;width:59.40000000000009px;overflow:hidden">北向立面图 (自动重</div>
<svg class="a" style="left:997.5px;top:318.26px;" width="10" height="10" viewBox="0 0 10 10"><path d="M0.5,8.5 V4 L4.5,1 L9.5,4 V8.5 Z" fill="#fff" stroke="#444" stroke-width="0.8"/></svg>
<div class="t" style="left:1010.0px;top:318.06px;font-size:7px;line-height:9px;color:#222;width:59.40000000000009px;overflow:hidden">东向立面图 (自动重</div>
<svg class="a" style="left:997.5px;top:330.62px;" width="10" height="10" viewBox="0 0 10 10"><path d="M0.5,8.5 V4 L4.5,1 L9.5,4 V8.5 Z" fill="#fff" stroke="#444" stroke-width="0.8"/></svg>
<div class="t" style="left:1010.0px;top:330.42px;font-size:7px;line-height:9px;color:#222;width:59.40000000000009px;overflow:hidden">南向立面图 (自动重</div>
<svg class="a" style="left:997.5px;top:342.97999999999996px;" width="10" height="10" viewBox="0 0 10 10"><path d="M0.5,8.5 V4 L4.5,1 L9.5,4 V8.5 Z" fill="#fff" stroke="#444" stroke-width="0.8"/></svg>
<div class="t" style="left:1010.0px;top:342.78px;font-size:7px;line-height:9px;color:#222;width:59.40000000000009px;overflow:hidden">西向立面图 (自动重</div>
<svg class="a" style="left:991.5px;top:355.34px;" width="10" height="10" viewBox="0 0 10 10"><rect x="0.5" y="0.5" width="9" height="8" fill="none" stroke="#444" stroke-width="0.8"/><path d="M2.5,2.5 H5 V6.5 H2.5 Z M6.5,2.5 H7.5" fill="none" stroke="#444" stroke-width="0.7"/></svg>
<div class="t" style="left:1004.0px;top:355.14px;font-size:7px;line-height:9px;color:#222;width:65.40000000000009px;overflow:hidden">室内立面图</div>
<svg class="a" style="left:991.5px;top:367.7px;" width="10" height="10" viewBox="0 0 10 10"><rect x="0.5" y="0.5" width="9" height="8" fill="none" stroke="#444" stroke-width="0.8"/><path d="M2,7 L7,2 M2,7 H8" fill="none" stroke="#444" stroke-width="0.8"/></svg>
<div class="t" style="left:1004.0px;top:367.5px;font-size:7px;line-height:9px;color:#222;width:65.40000000000009px;overflow:hidden">工作图</div>
<svg class="a" style="left:991.5px;top:380.06px;" width="10" height="10" viewBox="0 0 10 10"><circle cx="5" cy="4.5" r="4.2" fill="none" stroke="#444" stroke-width="0.8"/><path d="M5,0.5 V8.5 M1,4.5 H5 M5,3 H8" fill="none" stroke="#444" stroke-width="0.7"/></svg>
<div class="t" style="left:1004.0px;top:379.86px;font-size:7px;line-height:9px;color:#222;width:65.40000000000009px;overflow:hidden">详图</div>
<svg class="a" style="left:991.5px;top:392.42px;" width="10" height="10" viewBox="0 0 10 10"><rect x="0.5" y="0.5" width="9" height="8" fill="none" stroke="#444" stroke-width="0.8"/><path d="M3,6.5 L3,3 L6,2 V5.5 Z" fill="none" stroke="#444" stroke-width="0.7"/></svg>
<div class="t" style="left:1004.0px;top:392.22px;font-size:7px;line-height:9px;color:#222;width:65.40000000000009px;overflow:hidden">3D文档</div>
<svg class="a" style="left:991.5px;top:404.78000000000003px;" width="10" height="10" viewBox="0 0 10 10"><path d="M1,1.5 L3,0.5 H8.5 V8 L6.5,9 H1 Z M1,1.5 H6.5 V9 M6.5,1.5 L8.5,0.5" fill="#fff" stroke="#444" stroke-width="0.8"/></svg>
<svg class="a" style="left:985px;top:407.08000000000004px;" width="6" height="5" viewBox="0 0 6 5"><path d="M0.5,1 L3,3.8 L5.5,1" fill="none" stroke="#333" stroke-width="1.2"/></svg>
<div class="t" style="left:1004.0px;top:404.58000000000004px;font-size:7px;line-height:9px;color:#222;width:65.40000000000009px;overflow:hidden">3D</div>
<div class="a" style="left:975px;top:415.94px;width:94.4px;height:12.3px;background:#d9d9d9"></div>
<svg class="a" style="left:997.5px;top:417.14px;" width="10" height="10" viewBox="0 0 10 10"><path d="M1,1.5 L3,0.5 H8.5 V8 L6.5,9 H1 Z M1,1.5 H6.5 V9 M6.5,1.5 L8.5,0.5" fill="#fff" stroke="#444" stroke-width="0.8"/></svg>
<div class="t" style="left:1010.0px;top:416.94px;font-size:7px;line-height:9px;color:#222;width:59.40000000000009px;overflow:hidden;-webkit-text-stroke:0.3px #222">普通透视图</div>
<svg class="a" style="left:997.5px;top:429.49999999999994px;" width="10" height="10" viewBox="0 0 10 10"><path d="M1,3 L3.5,0.5 H9 V6.5 L6.5,9 H1 Z M1,3 H6.5 V9 M6.5,3 L9,0.5" fill="#fff" stroke="#444" stroke-width="0.8"/></svg>
<div class="t" style="left:1010.0px;top:429.29999999999995px;font-size:7px;line-height:9px;color:#222;width:59.40000000000009px;overflow:hidden">普通轴测图</div>
<svg class="a" style="left:991.5px;top:441.85999999999996px;" width="10" height="10" viewBox="0 0 10 10"><rect x="0.5" y="0.5" width="8.5" height="9" fill="none" stroke="#444" stroke-width="0.8"/><path d="M0.5,3 H9 M0.5,5.3 H9 M0.5,7.5 H9 M3.3,0.5 V9.5 M6.2,0.5 V9.5" stroke="#444" stroke-width="0.6"/></svg>
<svg class="a" style="left:985px;top:444.15999999999997px;" width="6" height="5" viewBox="0 0 6 5"><path d="M0.5,1 L3,3.8 L5.5,1" fill="none" stroke="#333" stroke-width="1.2"/></svg>
<div class="t" style="left:1004.0px;top:441.65999999999997px;font-size:7px;line-height:9px;color:#222;width:65.40000000000009px;overflow:hidden">清单</div>
<svg class="a" style="left:996.5px;top:454.21999999999997px;" width="10" height="10" viewBox="0 0 10 10"><rect x="0.5" y="2" width="9" height="4" fill="none" stroke="#555" stroke-width="0.7"/><path d="M2.5,2 V6 M4.5,2 V6 M6.5,2 V6" stroke="#555" stroke-width="0.5"/></svg>
<svg class="a" style="left:990.5px;top:456.52px;" width="6" height="5" viewBox="0 0 6 5"><path d="M0.5,1 L3,3.8 L5.5,1" fill="none" stroke="#333" stroke-width="1.2"/></svg>
<div class="t" style="left:1009.0px;top:454.02px;font-size:7px;line-height:9px;color:#222;width:60.40000000000009px;overflow:hidden">元素</div>
<svg class="a" style="left:1004px;top:466.58px;" width="10" height="10" viewBox="0 0 10 10"><rect x="0.5" y="0.5" width="8.5" height="9" fill="none" stroke="#444" stroke-width="0.8"/><path d="M0.5,3 H9 M0.5,5.3 H9 M0.5,7.5 H9 M3.3,0.5 V9.5 M6.2,0.5 V9.5" stroke="#444" stroke-width="0.6"/></svg>
<div class="t" style="left:1016.5px;top:466.38px;font-size:7px;line-height:9px;color:#222;width:52.90000000000009px;overflow:hidden">IES-01 墙壁一览表</div>
<svg class="a" style="left:1004px;top:478.94px;" width="10" height="10" viewBox="0 0 10 10"><rect x="0.5" y="0.5" width="8.5" height="9" fill="none" stroke="#444" stroke-width="0.8"/><path d="M0.5,3 H9 M0.5,5.3 H9 M0.5,7.5 H9 M3.3,0.5 V9.5 M6.2,0.5 V9.5" stroke="#444" stroke-width="0.6"/></svg>
<div class="t" style="left:1016.5px;top:478.74px;font-size:7px;line-height:9px;color:#222;width:52.90000000000009px;overflow:hidden">IES-02 所有的开洞</div>
<svg class="a" style="left:1004px;top:491.3px;" width="10" height="10" viewBox="0 0 10 10"><rect x="0.5" y="0.5" width="8.5" height="9" fill="none" stroke="#444" stroke-width="0.8"/><path d="M0.5,3 H9 M0.5,5.3 H9 M0.5,7.5 H9 M3.3,0.5 V9.5 M6.2,0.5 V9.5" stroke="#444" stroke-width="0.6"/></svg>
<div class="t" style="left:1016.5px;top:491.1px;font-size:7px;line-height:9px;color:#222;width:52.90000000000009px;overflow:hidden">IES-03 门一览表</div>
<svg class="a" style="left:1004px;top:503.66px;" width="10" height="10" viewBox="0 0 10 10"><rect x="0.5" y="0.5" width="8.5" height="9" fill="none" stroke="#444" stroke-width="0.8"/><path d="M0.5,3 H9 M0.5,5.3 H9 M0.5,7.5 H9 M3.3,0.5 V9.5 M6.2,0.5 V9.5" stroke="#444" stroke-width="0.6"/></svg>
<div class="t" style="left:1016.5px;top:503.46000000000004px;font-size:7px;line-height:9px;color:#222;width:52.90000000000009px;overflow:hidden">IES-04 窗一览表</div>
<svg class="a" style="left:1004px;top:516.02px;" width="10" height="10" viewBox="0 0 10 10"><rect x="0.5" y="0.5" width="8.5" height="9" fill="none" stroke="#444" stroke-width="0.8"/><path d="M0.5,3 H9 M0.5,5.3 H9 M0.5,7.5 H9 M3.3,0.5 V9.5 M6.2,0.5 V9.5" stroke="#444" stroke-width="0.6"/></svg>
<div class="t" style="left:1016.5px;top:515.8199999999999px;font-size:7px;line-height:9px;color:#222;width:52.90000000000009px;overflow:hidden">IES-05 对象列表</div>
<div class="a" style="left:975px;top:519.7px;width:94.4px;height:0.3px;background:#fff"></div>
<div class="a" style="left:975px;top:520px;width:102px;height:87px;background:#eff0f1"></div>
<div class="a" style="left:983px;top:521.5px;width:59px;height:6.5px;background:#cdcdcd"></div>
<svg class="a" style="left:977px;top:521.5px;" width="5" height="6" viewBox="0 0 5 6"><path d="M3.5,0.5 L1,3 L3.5,5.5" fill="none" stroke="#333" stroke-width="0.9"/></svg>
<svg class="a" style="left:1063px;top:521.5px;" width="5" height="6" viewBox="0 0 5 6"><path d="M1,0.5 L3.5,3 L1,5.5" fill="none" stroke="#333" stroke-width="0.9"/></svg>
<svg class="a" style="left:1031px;top:535px;" width="12" height="12" viewBox="0 0 12 12"><rect x="0.5" y="0.5" width="9" height="8" fill="none" stroke="#555" stroke-width="0.8"/><rect x="5" y="5" width="5.5" height="5.5" fill="#cfe0f8" stroke="#3a7ad8" stroke-width="0.8"/></svg>
<svg class="a" style="left:1047px;top:535px;" width="12" height="12" viewBox="0 0 12 12"><rect x="0.5" y="2" width="9" height="8" fill="none" stroke="#aaa" stroke-width="0.8"/><path d="M7,0.5 V5 M4.8,2.7 H9.2" stroke="#aab8d8" stroke-width="0.8"/></svg>
<svg class="a" style="left:1064px;top:536px;" width="10" height="10" viewBox="0 0 10 10"><path d="M1,1 L8.5,8.5 M8.5,1 L1,8.5" stroke="#f08070" stroke-width="1"/></svg>
<div class="a" style="left:974.3px;top:553px;width:102.7px;height:9.4px;background:#dcdcdc"></div>
<svg class="a" style="left:977px;top:556px;" width="5" height="3" viewBox="0 0 5 3"><path d="M0,0 H4.5 L2.25,3 Z" fill="#333"/></svg>
<div class="t" style="left:987px;top:553px;font-size:7px;line-height:9px;color:#222;">属性</div>
<svg class="a" style="left:977px;top:566px;" width="8" height="9" viewBox="0 0 8 9"><path d="M1,1.5 L2.5,0.5 H6.5 V7 L5,8 H1 Z M1,1.5 H5 V8" fill="none" stroke="#444" stroke-width="0.7"/></svg>
<div class="t" style="left:1009px;top:565.5px;font-size:7px;line-height:9px;color:#222;">普通透视图</div>
<div class="a" style="left:975.5px;top:578.4px;width:101.5px;height:12px;background:#e1e1e1;border:1px solid #d0d0d0"></div>
<div class="t" style="left:1016px;top:579px;font-size:7px;line-height:9px;color:#222;">设置...</div>
<div class="a" style="left:975px;top:594.4px;width:102px;height:12.6px;background:#eff0f1"></div>
<div class="a" style="left:975px;top:594px;width:102px;height:0.8px;background:#e0e0e0"></div>
<svg class="a" style="left:980px;top:596px;" width="11" height="10" viewBox="0 0 11 10"><rect x="0.5" y="2.5" width="7" height="6" fill="none" stroke="#333" stroke-width="0.8"/><path d="M2.5,2.5 V0.5 H9.5 V6.5 H7.5" fill="none" stroke="#333" stroke-width="0.8"/></svg>
<div class="a" style="left:991.4px;top:595px;width:0.8px;height:12px;background:#dcdcdc"></div>
<div class="a" style="left:1063.8px;top:595px;width:0.8px;height:12px;background:#dcdcdc"></div>
<div class="t" style="left:1000.5px;top:596px;font-size:7.8px;line-height:9.8px;color:#aaa;letter-spacing:-0.25px;-webkit-text-stroke:0">GRAPHISOFT ID</div>
<div class="a" style="left:743.9px;top:203.3px;width:103.2px;height:227.5px;background:#eff0f1;box-shadow:1px 2px 6px rgba(0,0,0,0.22);border:0.5px solid #d8d8d8;border-top:1px solid #b8b8b8"></div>
<div class="a" style="left:744.5px;top:204px;width:102px;height:16.7px;background:#fff"></div>
<div class="t" style="left:748px;top:206.7px;font-size:7px;line-height:9px;color:#222;">创建洞口</div>
<div class="a" style="left:836.2px;top:208.4px;width:10.5px;height:10.3px;background:#c8424a"></div>
<svg class="a" style="left:839px;top:211px;" width="5" height="5" viewBox="0 0 5 5"><path d="M0.8,0.8 L4.2,4.2 M4.2,0.8 L0.8,4.2" stroke="#fff" stroke-width="0.9"/></svg>
<div class="t" style="left:745.5px;top:224.2px;font-size:7px;line-height:9px;color:#222;">选定的元素:</div>
<div class="t" style="left:840.5px;top:224.2px;font-size:7px;line-height:9px;color:#222;">0</div>
<div class="a" style="left:745.5px;top:236.5px;width:100px;height:1px;background:#d0d0d0"></div>
<div class="t" style="left:745.5px;top:241.7px;font-size:7px;line-height:9px;color:#222;">洞口的形状:</div>
<div class="a" style="left:754.8px;top:256.7px;width:19.7px;height:13.8px;background:#cce4f7"></div>
<svg class="a" style="left:756px;top:257.5px;" width="17" height="12" viewBox="0 0 17 12"><rect x="1.5" y="2" width="7" height="6" fill="none" stroke="#333" stroke-width="0.8"/><circle cx="10" cy="7" r="3.8" fill="#cce4f7" stroke="#333" stroke-width="0.8"/></svg>
<svg class="a" style="left:779px;top:258.5px;" width="11" height="10" viewBox="0 0 11 10"><rect x="0.5" y="1.5" width="9" height="6.5" fill="none" stroke="#444" stroke-width="0.8"/></svg>
<svg class="a" style="left:798px;top:258.5px;" width="11" height="10" viewBox="0 0 11 10"><circle cx="5.5" cy="4.8" r="3.8" fill="none" stroke="#444" stroke-width="0.8"/></svg>
<div class="t" style="left:745.5px;top:274.7px;font-size:7px;line-height:9px;color:#222;">偏移:</div>
<svg class="a" style="left:756px;top:289px;" width="18" height="12" viewBox="0 0 18 12"><path d="M1,6 H7 M11,6 H17 M5,4 L7,6 L5,8 M13,4 L11,6 L13,8" fill="none" stroke="#333" stroke-width="0.8"/><path d="M6,2 H11 L13,4 V8 L11,10 H6" fill="none" stroke="#888" stroke-width="0.7"/></svg>
<div class="a" style="left:775px;top:289.5px;width:39px;height:13.8px;background:#fff;border:1px solid #888"></div>
<div class="t" style="left:777px;top:290.7px;font-size:7px;line-height:9px;color:#222;">300</div>
<svg class="a" style="left:745px;top:307px;" width="8" height="8" viewBox="0 0 8 8"><rect x="0.5" y="0.5" width="6.5" height="6.5" fill="#fff" stroke="#555" stroke-width="0.8"/><path d="M1.5,3.5 L3,5.5 L6,1.5" fill="none" stroke="#222" stroke-width="0.8"/></svg>
<div class="t" style="left:754.5px;top:305.7px;font-size:7px;line-height:9px;color:#222;">保持初始元素</div>
<svg class="a" style="left:745px;top:326px;" width="8" height="8" viewBox="0 0 8 8"><rect x="0.5" y="0.5" width="6.5" height="6.5" fill="#fff" stroke="#555" stroke-width="0.8"/><path d="M1.5,3.5 L3,5.5 L6,1.5" fill="none" stroke="#222" stroke-width="0.8"/></svg>
<div class="t" style="left:754.5px;top:324.7px;font-size:7px;line-height:9px;color:#222;">合并邻近的洞口</div>
<svg class="a" style="left:757px;top:339px;" width="17" height="14" viewBox="0 0 17 14"><rect x="0.5" y="1" width="11" height="3" fill="none" stroke="#555" stroke-width="0.6"/><rect x="0.5" y="9" width="11" height="3" fill="none" stroke="#555" stroke-width="0.6"/><path d="M0,6.5 H12" stroke="#555" stroke-width="0.5"/><path d="M14,4 V10 M13,5 L14,4 L15,5 M13,9 L14,10 L15,9" fill="none" stroke="#333" stroke-width="0.7"/></svg>
<div class="a" style="left:775.3px;top:339.4px;width:38.6px;height:14.1px;background:#fff;border:1px solid #888"></div>
<div class="t" style="left:777px;top:340.7px;font-size:7px;line-height:9px;color:#222;">300</div>
<div class="a" style="left:745.5px;top:355.5px;width:100px;height:1px;background:#d0d0d0"></div>
<div class="t" style="left:745.5px;top:360.2px;font-size:7px;line-height:9px;color:#222;">元素ID和信息</div>
<svg class="a" style="left:744.5px;top:379px;" width="9" height="9" viewBox="0 0 9 9"><circle cx="4.3" cy="4.3" r="3.7" fill="#fff" stroke="#444" stroke-width="0.8"/><circle cx="4.3" cy="4.3" r="2" fill="#222"/></svg>
<div class="t" style="left:754.5px;top:377.7px;font-size:7px;line-height:9px;color:#222;">从初始继承</div>
<svg class="a" style="left:744.5px;top:397px;" width="9" height="9" viewBox="0 0 9 9"><circle cx="4.3" cy="4.3" r="3.7" fill="#fff" stroke="#444" stroke-width="0.8"/></svg>
<div class="t" style="left:754.5px;top:395.7px;font-size:7px;line-height:9px;color:#222;">使用默认工具</div>
<div class="a" style="left:745.5px;top:410.5px;width:100px;height:1px;background:#d0d0d0"></div>
<div class="a" style="left:745.3px;top:415px;width:100.7px;height:12.4px;background:#e1e1e1;border:1px solid #cdcdcd"></div>
<div class="t" style="left:782.5px;top:415.7px;font-size:7px;line-height:9px;color:#222;">创建洞口</div>
</body></html>
